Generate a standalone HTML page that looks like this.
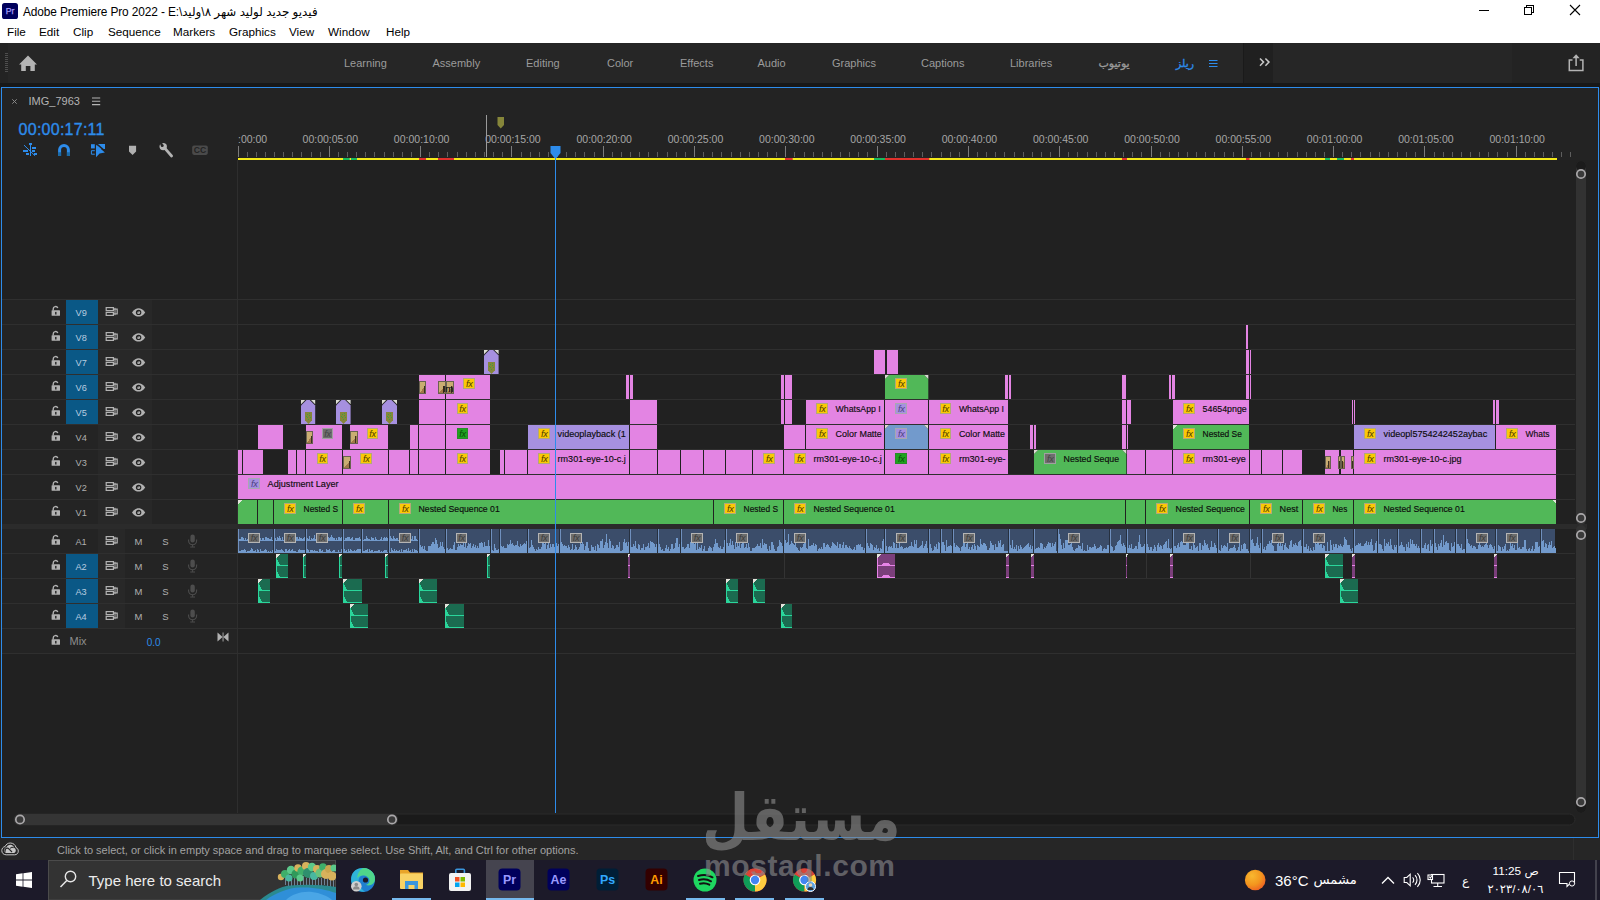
<!DOCTYPE html>
<html lang="en"><head><meta charset="utf-8"><title>Adobe Premiere Pro 2022</title>
<style>
html,body{margin:0;padding:0}
body{width:1600px;height:900px;position:relative;overflow:hidden;background:#232323;font-family:"Liberation Sans","DejaVu Sans",sans-serif;}
.abs{position:absolute;white-space:nowrap;line-height:1}
#titlebar{position:absolute;left:0;top:0;width:1600px;height:43px;background:#fff;color:#000}
#title{left:23px;top:7px;font-size:11.9px;letter-spacing:-0.12px}
.menu{top:26px;font-size:11.7px;color:#000}
#wsbar{position:absolute;left:0;top:43px;width:1600px;height:40px;background:#262626}
#wsgap{position:absolute;left:0;top:83px;width:1600px;height:5px;background:#181818}
.ws{top:14.5px;font-size:11px;color:#9b9b9b}
#panel{position:absolute;left:1px;top:87px;width:1596px;height:749px;border:1px solid #2d8ceb;background:#232323}
#status{position:absolute;left:0;top:838px;width:1600px;height:22px;background:#262626}
#taskbar{position:absolute;left:0;top:860px;width:1600px;height:40px;background:#1c1a29}
svg text{font-family:"Liberation Sans","DejaVu Sans",sans-serif}
</style></head><body>
<div id="titlebar">
<svg class="abs" style="left:2px;top:3px" width="16" height="16" viewBox="0 0 16 16"><rect width="16" height="16" rx="2.6" fill="#00005b"/><text x="8" y="10.8" font-size="8.6" fill="#a8a0ff" stroke="#a8a0ff" stroke-width="0.25" text-anchor="middle" font-family="Liberation Sans, sans-serif">Pr</text></svg>
<div class="abs" id="title">Adobe Premiere Pro 2022 - E:\فيديو جديد لوليد شهر ٨\وليد</div>
<div class="abs menu" style="left:7px">File</div>
<div class="abs menu" style="left:39px">Edit</div>
<div class="abs menu" style="left:73px">Clip</div>
<div class="abs menu" style="left:108px">Sequence</div>
<div class="abs menu" style="left:173px">Markers</div>
<div class="abs menu" style="left:229px">Graphics</div>
<div class="abs menu" style="left:289px">View</div>
<div class="abs menu" style="left:328px">Window</div>
<div class="abs menu" style="left:386px">Help</div>
<svg class="abs" style="left:1470px;top:0" width="130" height="30" viewBox="1470 0 130 30" fill="none" stroke="#000" stroke-width="1" shape-rendering="crispEdges">
<path d="M1479 10.5h10"/><rect x="1524.5" y="7.5" width="7" height="7"/><path d="M1526.5 7.5v-2h7v7h-2"/>
<path d="M1570 5l10 10M1580 5l-10 10" shape-rendering="auto" stroke-width="1.1"/></svg>
</div>
<div id="wsbar">
<div class="abs" style="left:0;top:0;width:8px;height:40px;background:#232323"></div>
<div class="abs" style="left:1243px;top:0;width:30px;height:40px;background:#202020"></div>
<div class="abs" style="left:1243px;top:0;width:1px;height:40px;background:#1a1a1a"></div>
<div class="abs" style="left:1512px;top:0;width:88px;height:40px;background:#232323"></div>
<svg class="abs" style="left:0;top:0" width="1600" height="40" viewBox="0 43 1600 40">
<path d="M5 53.5h3M5 55.5h3M5 57.5h3M5 59.5h3M5 61.5h3M5 63.5h3M5 65.5h3M5 67.5h3M5 69.5h3M5 71.5h3" stroke="#4e4e4e" stroke-width="1"/>
<path d="M28 55.6L37 64.6H34.8V71H30.4V66H25.8V71H21.2V64.6H19Z" fill="#b4b4b4"/>
<path d="M1209 60.5h8.5M1209 63.5h8.5M1209 66.5h8.5" stroke="#2d8ceb" stroke-width="1.1"/>
<path d="M1260 58.5l3.6 3.6-3.6 3.6M1265.4 58.5l3.6 3.6-3.6 3.6" stroke="#c8c8c8" stroke-width="1.5" fill="none"/>
<path d="M1572.5 60h-3.2v10.4h13.6V60h-3.2" stroke="#b4b4b4" stroke-width="1.5" fill="none"/><path d="M1576.1 66v-9" stroke="#b4b4b4" stroke-width="1.5"/><path d="M1576.1 54.2l3.6 4h-7.2z" fill="#b4b4b4"/>
</svg>
<div class="abs ws" style="left:344px">Learning</div>
<div class="abs ws" style="left:432.5px">Assembly</div>
<div class="abs ws" style="left:526px">Editing</div>
<div class="abs ws" style="left:607px">Color</div>
<div class="abs ws" style="left:680px">Effects</div>
<div class="abs ws" style="left:757.5px">Audio</div>
<div class="abs ws" style="left:832px">Graphics</div>
<div class="abs ws" style="left:921px">Captions</div>
<div class="abs ws" style="left:1010px">Libraries</div>
<div class="abs ws" style="left:1098.5px;top:14.5px;font-size:11px;-webkit-text-stroke:0.3px #9b9b9b" dir="rtl">يوتيوب</div>
<div class="abs ws" style="left:1176px;top:14.5px;font-size:11px;color:#2d8ceb;-webkit-text-stroke:0.3px #2d8ceb" dir="rtl">ريلز</div>
</div>
<div id="wsgap"></div>
<div id="panel"></div>
<svg class="abs" style="left:0;top:0" width="1600" height="900" viewBox="0 0 1600 900">
<rect x="2" y="88" width="1596" height="72" fill="#232323"/>
<rect x="2" y="160" width="1596" height="677" fill="#212121"/>
<rect x="2" y="300" width="235" height="225" fill="#242424"/>
<rect x="2" y="529" width="235" height="125" fill="#242424"/>
<rect x="98" y="300" width="54" height="225" fill="#282828"/>
<rect x="98" y="529" width="27" height="100" fill="#282828"/>
<rect x="237" y="160" width="1" height="653" fill="#2e2e2e"/>
<rect x="2" y="299" width="1573" height="1" fill="#2f2f2f"/>
<rect x="2" y="324" width="1573" height="1" fill="#2f2f2f"/>
<rect x="2" y="349" width="1573" height="1" fill="#2f2f2f"/>
<rect x="2" y="374" width="1573" height="1" fill="#2f2f2f"/>
<rect x="2" y="399" width="1573" height="1" fill="#2f2f2f"/>
<rect x="2" y="424" width="1573" height="1" fill="#2f2f2f"/>
<rect x="2" y="449" width="1573" height="1" fill="#2f2f2f"/>
<rect x="2" y="474" width="1573" height="1" fill="#2f2f2f"/>
<rect x="2" y="499" width="1573" height="1" fill="#2f2f2f"/>
<rect x="2" y="524" width="1585" height="5" fill="#2b2b2b"/>
<rect x="2" y="553" width="1573" height="1" fill="#2f2f2f"/>
<rect x="2" y="578" width="1573" height="1" fill="#2f2f2f"/>
<rect x="2" y="603" width="1573" height="1" fill="#2f2f2f"/>
<rect x="2" y="628" width="1573" height="1" fill="#2f2f2f"/>
<rect x="2" y="653" width="1573" height="1" fill="#2f2f2f"/>
<rect x="1576" y="161" width="10" height="364" fill="#323232" rx="5"/>
<rect x="1576" y="161" width="10" height="10" fill="#1b1b1b" rx="5"/>
<rect x="1576" y="525" width="10" height="288" fill="#323232" rx="5"/>
<rect x="1576" y="797" width="10" height="16" fill="#1b1b1b" rx="5"/>
<circle cx="1581" cy="174" r="4.2" fill="#3a3a3a" stroke="#aaa8aa" stroke-width="1.7"/>
<circle cx="1581" cy="518" r="4.2" fill="#3a3a3a" stroke="#aaa8aa" stroke-width="1.7"/>
<circle cx="1581" cy="535" r="4.2" fill="#3a3a3a" stroke="#aaa8aa" stroke-width="1.7"/>
<circle cx="1581" cy="802" r="4.2" fill="#3a3a3a" stroke="#aaa8aa" stroke-width="1.7"/>
<rect x="14" y="814" width="1561" height="11" fill="#1a1a1a" rx="5.5" stroke="#2b2b2b" stroke-width="1"/>
<rect x="14" y="814" width="384" height="11" fill="#353535" rx="5.5"/>
<circle cx="20" cy="819.5" r="4.2" fill="#3a3a3a" stroke="#aaa8aa" stroke-width="1.7"/>
<circle cx="392" cy="819.5" r="4.2" fill="#3a3a3a" stroke="#aaa8aa" stroke-width="1.7"/>
<g fill="#6e6e6e" shape-rendering="crispEdges">
<rect x="238" y="146" width="1" height="11" fill="#7c7c7c"/>
<rect x="247" y="152" width="1" height="5" fill="#5e5e5e"/>
<rect x="256" y="152" width="1" height="5" fill="#5e5e5e"/>
<rect x="265" y="152" width="1" height="5" fill="#5e5e5e"/>
<rect x="274" y="152" width="1" height="5" fill="#5e5e5e"/>
<rect x="283" y="152" width="1" height="5" fill="#5e5e5e"/>
<rect x="292" y="152" width="1" height="5" fill="#5e5e5e"/>
<rect x="301" y="152" width="1" height="5" fill="#5e5e5e"/>
<rect x="311" y="152" width="1" height="5" fill="#5e5e5e"/>
<rect x="320" y="152" width="1" height="5" fill="#5e5e5e"/>
<rect x="329" y="146" width="1" height="11" fill="#7c7c7c"/>
<rect x="338" y="152" width="1" height="5" fill="#5e5e5e"/>
<rect x="347" y="152" width="1" height="5" fill="#5e5e5e"/>
<rect x="356" y="152" width="1" height="5" fill="#5e5e5e"/>
<rect x="365" y="152" width="1" height="5" fill="#5e5e5e"/>
<rect x="374" y="152" width="1" height="5" fill="#5e5e5e"/>
<rect x="384" y="152" width="1" height="5" fill="#5e5e5e"/>
<rect x="393" y="152" width="1" height="5" fill="#5e5e5e"/>
<rect x="402" y="152" width="1" height="5" fill="#5e5e5e"/>
<rect x="411" y="152" width="1" height="5" fill="#5e5e5e"/>
<rect x="420" y="146" width="1" height="11" fill="#7c7c7c"/>
<rect x="429" y="152" width="1" height="5" fill="#5e5e5e"/>
<rect x="438" y="152" width="1" height="5" fill="#5e5e5e"/>
<rect x="447" y="152" width="1" height="5" fill="#5e5e5e"/>
<rect x="457" y="152" width="1" height="5" fill="#5e5e5e"/>
<rect x="466" y="152" width="1" height="5" fill="#5e5e5e"/>
<rect x="475" y="152" width="1" height="5" fill="#5e5e5e"/>
<rect x="484" y="152" width="1" height="5" fill="#5e5e5e"/>
<rect x="493" y="152" width="1" height="5" fill="#5e5e5e"/>
<rect x="502" y="152" width="1" height="5" fill="#5e5e5e"/>
<rect x="511" y="146" width="1" height="11" fill="#7c7c7c"/>
<rect x="521" y="152" width="1" height="5" fill="#5e5e5e"/>
<rect x="530" y="152" width="1" height="5" fill="#5e5e5e"/>
<rect x="539" y="152" width="1" height="5" fill="#5e5e5e"/>
<rect x="548" y="152" width="1" height="5" fill="#5e5e5e"/>
<rect x="557" y="152" width="1" height="5" fill="#5e5e5e"/>
<rect x="566" y="152" width="1" height="5" fill="#5e5e5e"/>
<rect x="575" y="152" width="1" height="5" fill="#5e5e5e"/>
<rect x="584" y="152" width="1" height="5" fill="#5e5e5e"/>
<rect x="594" y="152" width="1" height="5" fill="#5e5e5e"/>
<rect x="603" y="146" width="1" height="11" fill="#7c7c7c"/>
<rect x="612" y="152" width="1" height="5" fill="#5e5e5e"/>
<rect x="621" y="152" width="1" height="5" fill="#5e5e5e"/>
<rect x="630" y="152" width="1" height="5" fill="#5e5e5e"/>
<rect x="639" y="152" width="1" height="5" fill="#5e5e5e"/>
<rect x="648" y="152" width="1" height="5" fill="#5e5e5e"/>
<rect x="657" y="152" width="1" height="5" fill="#5e5e5e"/>
<rect x="667" y="152" width="1" height="5" fill="#5e5e5e"/>
<rect x="676" y="152" width="1" height="5" fill="#5e5e5e"/>
<rect x="685" y="152" width="1" height="5" fill="#5e5e5e"/>
<rect x="694" y="146" width="1" height="11" fill="#7c7c7c"/>
<rect x="703" y="152" width="1" height="5" fill="#5e5e5e"/>
<rect x="712" y="152" width="1" height="5" fill="#5e5e5e"/>
<rect x="721" y="152" width="1" height="5" fill="#5e5e5e"/>
<rect x="731" y="152" width="1" height="5" fill="#5e5e5e"/>
<rect x="740" y="152" width="1" height="5" fill="#5e5e5e"/>
<rect x="749" y="152" width="1" height="5" fill="#5e5e5e"/>
<rect x="758" y="152" width="1" height="5" fill="#5e5e5e"/>
<rect x="767" y="152" width="1" height="5" fill="#5e5e5e"/>
<rect x="776" y="152" width="1" height="5" fill="#5e5e5e"/>
<rect x="785" y="146" width="1" height="11" fill="#7c7c7c"/>
<rect x="794" y="152" width="1" height="5" fill="#5e5e5e"/>
<rect x="804" y="152" width="1" height="5" fill="#5e5e5e"/>
<rect x="813" y="152" width="1" height="5" fill="#5e5e5e"/>
<rect x="822" y="152" width="1" height="5" fill="#5e5e5e"/>
<rect x="831" y="152" width="1" height="5" fill="#5e5e5e"/>
<rect x="840" y="152" width="1" height="5" fill="#5e5e5e"/>
<rect x="849" y="152" width="1" height="5" fill="#5e5e5e"/>
<rect x="858" y="152" width="1" height="5" fill="#5e5e5e"/>
<rect x="867" y="152" width="1" height="5" fill="#5e5e5e"/>
<rect x="877" y="146" width="1" height="11" fill="#7c7c7c"/>
<rect x="886" y="152" width="1" height="5" fill="#5e5e5e"/>
<rect x="895" y="152" width="1" height="5" fill="#5e5e5e"/>
<rect x="904" y="152" width="1" height="5" fill="#5e5e5e"/>
<rect x="913" y="152" width="1" height="5" fill="#5e5e5e"/>
<rect x="922" y="152" width="1" height="5" fill="#5e5e5e"/>
<rect x="931" y="152" width="1" height="5" fill="#5e5e5e"/>
<rect x="941" y="152" width="1" height="5" fill="#5e5e5e"/>
<rect x="950" y="152" width="1" height="5" fill="#5e5e5e"/>
<rect x="959" y="152" width="1" height="5" fill="#5e5e5e"/>
<rect x="968" y="146" width="1" height="11" fill="#7c7c7c"/>
<rect x="977" y="152" width="1" height="5" fill="#5e5e5e"/>
<rect x="986" y="152" width="1" height="5" fill="#5e5e5e"/>
<rect x="995" y="152" width="1" height="5" fill="#5e5e5e"/>
<rect x="1004" y="152" width="1" height="5" fill="#5e5e5e"/>
<rect x="1014" y="152" width="1" height="5" fill="#5e5e5e"/>
<rect x="1023" y="152" width="1" height="5" fill="#5e5e5e"/>
<rect x="1032" y="152" width="1" height="5" fill="#5e5e5e"/>
<rect x="1041" y="152" width="1" height="5" fill="#5e5e5e"/>
<rect x="1050" y="152" width="1" height="5" fill="#5e5e5e"/>
<rect x="1059" y="146" width="1" height="11" fill="#7c7c7c"/>
<rect x="1068" y="152" width="1" height="5" fill="#5e5e5e"/>
<rect x="1077" y="152" width="1" height="5" fill="#5e5e5e"/>
<rect x="1087" y="152" width="1" height="5" fill="#5e5e5e"/>
<rect x="1096" y="152" width="1" height="5" fill="#5e5e5e"/>
<rect x="1105" y="152" width="1" height="5" fill="#5e5e5e"/>
<rect x="1114" y="152" width="1" height="5" fill="#5e5e5e"/>
<rect x="1123" y="152" width="1" height="5" fill="#5e5e5e"/>
<rect x="1132" y="152" width="1" height="5" fill="#5e5e5e"/>
<rect x="1141" y="152" width="1" height="5" fill="#5e5e5e"/>
<rect x="1151" y="146" width="1" height="11" fill="#7c7c7c"/>
<rect x="1160" y="152" width="1" height="5" fill="#5e5e5e"/>
<rect x="1169" y="152" width="1" height="5" fill="#5e5e5e"/>
<rect x="1178" y="152" width="1" height="5" fill="#5e5e5e"/>
<rect x="1187" y="152" width="1" height="5" fill="#5e5e5e"/>
<rect x="1196" y="152" width="1" height="5" fill="#5e5e5e"/>
<rect x="1205" y="152" width="1" height="5" fill="#5e5e5e"/>
<rect x="1214" y="152" width="1" height="5" fill="#5e5e5e"/>
<rect x="1224" y="152" width="1" height="5" fill="#5e5e5e"/>
<rect x="1233" y="152" width="1" height="5" fill="#5e5e5e"/>
<rect x="1242" y="146" width="1" height="11" fill="#7c7c7c"/>
<rect x="1251" y="152" width="1" height="5" fill="#5e5e5e"/>
<rect x="1260" y="152" width="1" height="5" fill="#5e5e5e"/>
<rect x="1269" y="152" width="1" height="5" fill="#5e5e5e"/>
<rect x="1278" y="152" width="1" height="5" fill="#5e5e5e"/>
<rect x="1287" y="152" width="1" height="5" fill="#5e5e5e"/>
<rect x="1297" y="152" width="1" height="5" fill="#5e5e5e"/>
<rect x="1306" y="152" width="1" height="5" fill="#5e5e5e"/>
<rect x="1315" y="152" width="1" height="5" fill="#5e5e5e"/>
<rect x="1324" y="152" width="1" height="5" fill="#5e5e5e"/>
<rect x="1333" y="146" width="1" height="11" fill="#7c7c7c"/>
<rect x="1342" y="152" width="1" height="5" fill="#5e5e5e"/>
<rect x="1351" y="152" width="1" height="5" fill="#5e5e5e"/>
<rect x="1360" y="152" width="1" height="5" fill="#5e5e5e"/>
<rect x="1370" y="152" width="1" height="5" fill="#5e5e5e"/>
<rect x="1379" y="152" width="1" height="5" fill="#5e5e5e"/>
<rect x="1388" y="152" width="1" height="5" fill="#5e5e5e"/>
<rect x="1397" y="152" width="1" height="5" fill="#5e5e5e"/>
<rect x="1406" y="152" width="1" height="5" fill="#5e5e5e"/>
<rect x="1415" y="152" width="1" height="5" fill="#5e5e5e"/>
<rect x="1424" y="146" width="1" height="11" fill="#7c7c7c"/>
<rect x="1434" y="152" width="1" height="5" fill="#5e5e5e"/>
<rect x="1443" y="152" width="1" height="5" fill="#5e5e5e"/>
<rect x="1452" y="152" width="1" height="5" fill="#5e5e5e"/>
<rect x="1461" y="152" width="1" height="5" fill="#5e5e5e"/>
<rect x="1470" y="152" width="1" height="5" fill="#5e5e5e"/>
<rect x="1479" y="152" width="1" height="5" fill="#5e5e5e"/>
<rect x="1488" y="152" width="1" height="5" fill="#5e5e5e"/>
<rect x="1497" y="152" width="1" height="5" fill="#5e5e5e"/>
<rect x="1507" y="152" width="1" height="5" fill="#5e5e5e"/>
<rect x="1516" y="146" width="1" height="11" fill="#7c7c7c"/>
<rect x="1525" y="152" width="1" height="5" fill="#5e5e5e"/>
<rect x="1534" y="152" width="1" height="5" fill="#5e5e5e"/>
<rect x="1543" y="152" width="1" height="5" fill="#5e5e5e"/>
<rect x="1552" y="152" width="1" height="5" fill="#5e5e5e"/>
<rect x="1561" y="152" width="1" height="5" fill="#5e5e5e"/>
<rect x="1570" y="152" width="1" height="5" fill="#5e5e5e"/>
</g>
<text x="238" y="143" fill="#a6a6a6" font-size="10.5" text-anchor="start">:00:00</text>
<text x="330.3" y="143" fill="#a6a6a6" font-size="10.5" text-anchor="middle">00:00:05:00</text>
<text x="421.6" y="143" fill="#a6a6a6" font-size="10.5" text-anchor="middle">00:00:10:00</text>
<text x="512.9" y="143" fill="#a6a6a6" font-size="10.5" text-anchor="middle">00:00:15:00</text>
<text x="604.2" y="143" fill="#a6a6a6" font-size="10.5" text-anchor="middle">00:00:20:00</text>
<text x="695.5" y="143" fill="#a6a6a6" font-size="10.5" text-anchor="middle">00:00:25:00</text>
<text x="786.8" y="143" fill="#a6a6a6" font-size="10.5" text-anchor="middle">00:00:30:00</text>
<text x="878.1" y="143" fill="#a6a6a6" font-size="10.5" text-anchor="middle">00:00:35:00</text>
<text x="969.4" y="143" fill="#a6a6a6" font-size="10.5" text-anchor="middle">00:00:40:00</text>
<text x="1060.7" y="143" fill="#a6a6a6" font-size="10.5" text-anchor="middle">00:00:45:00</text>
<text x="1152" y="143" fill="#a6a6a6" font-size="10.5" text-anchor="middle">00:00:50:00</text>
<text x="1243.3" y="143" fill="#a6a6a6" font-size="10.5" text-anchor="middle">00:00:55:00</text>
<text x="1334.6" y="143" fill="#a6a6a6" font-size="10.5" text-anchor="middle">00:01:00:00</text>
<text x="1425.9" y="143" fill="#a6a6a6" font-size="10.5" text-anchor="middle">00:01:05:00</text>
<text x="1517.2" y="143" fill="#a6a6a6" font-size="10.5" text-anchor="middle">00:01:10:00</text>
<rect x="238" y="158" width="1319" height="2" fill="#f4ea1a" shape-rendering="crispEdges"/>
<rect x="343" y="158" width="6.7" height="2" fill="#18b85c"/>
<rect x="351" y="158" width="6" height="2" fill="#18b85c"/>
<rect x="419" y="158" width="7" height="2" fill="#e0312c"/>
<rect x="438" y="158" width="16" height="2" fill="#e0312c"/>
<rect x="785" y="158" width="7.7" height="2" fill="#e0312c"/>
<rect x="874" y="158" width="11" height="2" fill="#18b85c"/>
<rect x="885" y="158" width="44.3" height="2" fill="#e0312c"/>
<rect x="1122" y="158" width="5" height="2" fill="#e0312c"/>
<rect x="1246" y="158" width="3.5" height="2" fill="#e0312c"/>
<rect x="1325" y="158" width="5" height="2" fill="#18b85c"/>
<rect x="1337" y="158" width="7" height="2" fill="#18b85c"/>
<rect x="1351" y="158" width="3" height="2" fill="#e0312c"/>
<rect x="486" y="115" width="1" height="42" fill="#9a9a9a"/>
<polygon points="497.5,117 504,117 504,125 500.75,128.5 497.5,125" fill="#86863a"/>
<g shape-rendering="crispEdges" font-family="Liberation Sans, DejaVu Sans, sans-serif">
<rect x="1246" y="325" width="1.5" height="24" fill="#E384E3"/>
<polygon points="484,355.5 489.5,350 493.1,350 498.6,355.5 498.6,374 484,374" fill="#A690E0" shape-rendering="geometricPrecision"/>
<polygon points="484,350 488.2,350 484,354.2" fill="#dcdcd4" shape-rendering="geometricPrecision"/>
<polygon points="498.6,350 494.4,350 498.6,354.2" fill="#dcdcd4" shape-rendering="geometricPrecision"/>
<polygon points="488,362 495,362 495,370.2 491.5,373.9 488,370.2" fill="#86863a" shape-rendering="geometricPrecision"/>
<rect x="490" y="364" width="1" height="1" fill="#3fa03f"/>
<rect x="492" y="365" width="1" height="1" fill="#3fa03f"/>
<rect x="490" y="367" width="1" height="1" fill="#3fa03f"/>
<rect x="493" y="367" width="1" height="1" fill="#3fa03f"/>
<rect x="491" y="369" width="1" height="1" fill="#3fa03f"/>
<rect x="492" y="363" width="1" height="1" fill="#3fa03f"/>
<rect x="489" y="366" width="1" height="1" fill="#3fa03f"/>
<rect x="874" y="350" width="11" height="24" fill="#E384E3"/>
<rect x="886.5" y="350" width="11.5" height="24" fill="#E384E3"/>
<rect x="1246" y="350" width="3" height="24" fill="#E384E3"/>
<rect x="1249.8" y="350" width="1.2" height="24" fill="#E384E3"/>
<rect x="419" y="375" width="26" height="24" fill="#E384E3"/>
<rect x="419.5" y="381.5" width="6" height="12" fill="#c9ad72" stroke="#6a6250" stroke-width="1"/>
<polygon points="420,393 425,393 425,386" fill="#a07848"/>
<rect x="423.5" y="386" width="1" height="7" fill="#3a3020"/>
<rect x="446" y="375" width="44" height="24" fill="#E384E3"/>
<rect x="446.5" y="381.5" width="6.5" height="12" fill="#c9ad72" stroke="#6a6250" stroke-width="1"/>
<polygon points="447,393 452.5,393 452.5,386" fill="#a07848"/>
<rect x="451" y="386" width="1" height="7" fill="#3a3020"/>
<rect x="463.9" y="378.5" width="10.7" height="9.8" fill="#fbc906" stroke="#b4a878" stroke-width="1"/>
<text x="469.3" y="386.7" fill="#4a3a00" font-size="9.2" font-style="italic" text-anchor="middle" letter-spacing="-0.3">fx</text>
<rect x="438.5" y="381.5" width="6.5" height="12" fill="#c9ad72" stroke="#6a6250" stroke-width="1"/>
<polygon points="439,393 444.5,393 444.5,386" fill="#a07848"/>
<rect x="443" y="386" width="1" height="7" fill="#3a3020"/>
<text x="443" y="391.8" fill="#0a0a0a" font-size="9.4" stroke="#0a0a0a" stroke-width="0.15">Im</text>
<rect x="626" y="375" width="2.8" height="24" fill="#E384E3"/>
<rect x="630" y="375" width="3" height="24" fill="#E384E3"/>
<rect x="781.2" y="375" width="2.6" height="24" fill="#E384E3"/>
<rect x="785" y="375" width="7" height="24" fill="#E384E3"/>
<rect x="1005" y="375" width="2.7" height="24" fill="#E384E3"/>
<rect x="1008.5" y="375" width="2.5" height="24" fill="#E384E3"/>
<rect x="1122" y="375" width="4" height="24" fill="#E384E3"/>
<rect x="1169" y="375" width="2" height="24" fill="#E384E3"/>
<rect x="1172" y="375" width="2.8" height="24" fill="#E384E3"/>
<rect x="1246" y="375" width="3" height="24" fill="#E384E3"/>
<rect x="1249.8" y="375" width="1.2" height="24" fill="#E384E3"/>
<polygon points="885,379 889,375 924.3,375 928.3,379 928.3,399 885,399" fill="#51B858" shape-rendering="geometricPrecision"/>
<polygon points="885,375 889,375 885,379" fill="#dcdcd4" shape-rendering="geometricPrecision"/>
<polygon points="928.3,375 924.3,375 928.3,379" fill="#dcdcd4" shape-rendering="geometricPrecision"/>
<rect x="895.8" y="378.5" width="10.7" height="9.8" fill="#fbc906" stroke="#b4a878" stroke-width="1"/>
<text x="901.2" y="386.7" fill="#4a3a00" font-size="9.2" font-style="italic" text-anchor="middle" letter-spacing="-0.3">fx</text>
<polygon points="301,405.5 306.5,400 309.7,400 315.2,405.5 315.2,424 301,424" fill="#A690E0" shape-rendering="geometricPrecision"/>
<polygon points="301,400 305.2,400 301,404.2" fill="#dcdcd4" shape-rendering="geometricPrecision"/>
<polygon points="315.2,400 311,400 315.2,404.2" fill="#dcdcd4" shape-rendering="geometricPrecision"/>
<polygon points="305,412 312,412 312,420.2 308.5,423.9 305,420.2" fill="#86863a" shape-rendering="geometricPrecision"/>
<rect x="307" y="414" width="1" height="1" fill="#3fa03f"/>
<rect x="309" y="415" width="1" height="1" fill="#3fa03f"/>
<rect x="307" y="417" width="1" height="1" fill="#3fa03f"/>
<rect x="310" y="417" width="1" height="1" fill="#3fa03f"/>
<rect x="308" y="419" width="1" height="1" fill="#3fa03f"/>
<rect x="309" y="413" width="1" height="1" fill="#3fa03f"/>
<rect x="306" y="416" width="1" height="1" fill="#3fa03f"/>
<polygon points="336,405.5 341.5,400 345.1,400 350.6,405.5 350.6,424 336,424" fill="#A690E0" shape-rendering="geometricPrecision"/>
<polygon points="336,400 340.2,400 336,404.2" fill="#dcdcd4" shape-rendering="geometricPrecision"/>
<polygon points="350.6,400 346.4,400 350.6,404.2" fill="#dcdcd4" shape-rendering="geometricPrecision"/>
<polygon points="340,412 347,412 347,420.2 343.5,423.9 340,420.2" fill="#86863a" shape-rendering="geometricPrecision"/>
<rect x="342" y="414" width="1" height="1" fill="#3fa03f"/>
<rect x="344" y="415" width="1" height="1" fill="#3fa03f"/>
<rect x="342" y="417" width="1" height="1" fill="#3fa03f"/>
<rect x="345" y="417" width="1" height="1" fill="#3fa03f"/>
<rect x="343" y="419" width="1" height="1" fill="#3fa03f"/>
<rect x="344" y="413" width="1" height="1" fill="#3fa03f"/>
<rect x="341" y="416" width="1" height="1" fill="#3fa03f"/>
<polygon points="382,405.5 387.5,400 391.5,400 397,405.5 397,424 382,424" fill="#A690E0" shape-rendering="geometricPrecision"/>
<polygon points="382,400 386.2,400 382,404.2" fill="#dcdcd4" shape-rendering="geometricPrecision"/>
<polygon points="397,400 392.8,400 397,404.2" fill="#dcdcd4" shape-rendering="geometricPrecision"/>
<polygon points="386,412 393,412 393,420.2 389.5,423.9 386,420.2" fill="#86863a" shape-rendering="geometricPrecision"/>
<rect x="388" y="414" width="1" height="1" fill="#3fa03f"/>
<rect x="390" y="415" width="1" height="1" fill="#3fa03f"/>
<rect x="388" y="417" width="1" height="1" fill="#3fa03f"/>
<rect x="391" y="417" width="1" height="1" fill="#3fa03f"/>
<rect x="389" y="419" width="1" height="1" fill="#3fa03f"/>
<rect x="390" y="413" width="1" height="1" fill="#3fa03f"/>
<rect x="387" y="416" width="1" height="1" fill="#3fa03f"/>
<rect x="419" y="400" width="26" height="24" fill="#E384E3"/>
<rect x="446" y="400" width="44" height="24" fill="#E384E3"/>
<rect x="457" y="403.5" width="10.7" height="9.8" fill="#fbc906" stroke="#b4a878" stroke-width="1"/>
<text x="462.4" y="411.7" fill="#4a3a00" font-size="9.2" font-style="italic" text-anchor="middle" letter-spacing="-0.3">fx</text>
<rect x="630" y="400" width="26.8" height="24" fill="#E384E3"/>
<rect x="781.2" y="400" width="2.6" height="24" fill="#E384E3"/>
<rect x="785" y="400" width="7" height="24" fill="#E384E3"/>
<rect x="1122" y="400" width="4" height="24" fill="#E384E3"/>
<rect x="1127.2" y="400" width="3.8" height="24" fill="#E384E3"/>
<rect x="1352" y="400" width="1" height="24" fill="#E384E3"/>
<rect x="1354" y="400" width="1" height="24" fill="#E384E3"/>
<rect x="1493" y="400" width="1.8" height="24" fill="#E384E3"/>
<rect x="1496" y="400" width="3" height="24" fill="#E384E3"/>
<rect x="806" y="400" width="78" height="24" fill="#E384E3"/>
<rect x="816.8" y="403.5" width="10.7" height="9.8" fill="#fbc906" stroke="#b4a878" stroke-width="1"/>
<text x="822.2" y="411.7" fill="#4a3a00" font-size="9.2" font-style="italic" text-anchor="middle" letter-spacing="-0.3">fx</text>
<text x="835.6" y="411.8" fill="#0c0c0c" font-size="9.4" textLength="45.1" lengthAdjust="spacingAndGlyphs" stroke="#0c0c0c" stroke-width="0.15">WhatsApp I</text>
<rect x="885" y="400" width="43" height="24" fill="#E384E3"/>
<rect x="895.8" y="403.5" width="10.7" height="9.8" fill="#a690e0" stroke="#a8a8b0" stroke-width="1"/>
<text x="901.2" y="411.7" fill="#4a4080" font-size="9.2" font-style="italic" text-anchor="middle" letter-spacing="-0.3">fx</text>
<rect x="929.3" y="400" width="78.4" height="24" fill="#E384E3"/>
<rect x="940.1" y="403.5" width="10.7" height="9.8" fill="#fbc906" stroke="#b4a878" stroke-width="1"/>
<text x="945.5" y="411.7" fill="#4a3a00" font-size="9.2" font-style="italic" text-anchor="middle" letter-spacing="-0.3">fx</text>
<text x="958.9" y="411.8" fill="#0c0c0c" font-size="9.4" textLength="45.1" lengthAdjust="spacingAndGlyphs" stroke="#0c0c0c" stroke-width="0.15">WhatsApp I</text>
<rect x="1173" y="400" width="76" height="24" fill="#E384E3"/>
<rect x="1183.8" y="403.5" width="10.7" height="9.8" fill="#fbc906" stroke="#b4a878" stroke-width="1"/>
<text x="1189.2" y="411.7" fill="#4a3a00" font-size="9.2" font-style="italic" text-anchor="middle" letter-spacing="-0.3">fx</text>
<text x="1202.6" y="411.8" fill="#0c0c0c" font-size="9.4" textLength="44.1" lengthAdjust="spacingAndGlyphs" stroke="#0c0c0c" stroke-width="0.15">54654pnge</text>
<rect x="258" y="425" width="24.8" height="24" fill="#E384E3"/>
<rect x="306" y="425" width="36" height="24" fill="#E384E3"/>
<rect x="306.5" y="431.5" width="6" height="12" fill="#c9ad72" stroke="#6a6250" stroke-width="1"/>
<polygon points="307,443 312,443 312,436" fill="#a07848"/>
<rect x="310.5" y="436" width="1" height="7" fill="#3a3020"/>
<rect x="322" y="428.5" width="10.7" height="9.8" fill="#6e6e6e" stroke="#a0a0a0" stroke-width="1"/>
<text x="327.4" y="436.7" fill="#454545" font-size="9.2" font-style="italic" text-anchor="middle" letter-spacing="-0.3">fx</text>
<rect x="350" y="425" width="38" height="24" fill="#E384E3"/>
<rect x="350.5" y="431.5" width="6.5" height="12" fill="#c9ad72" stroke="#6a6250" stroke-width="1"/>
<polygon points="351,443 356.5,443 356.5,436" fill="#a07848"/>
<rect x="355" y="436" width="1" height="7" fill="#3a3020"/>
<rect x="367.2" y="428.5" width="10.7" height="9.8" fill="#fbc906" stroke="#b4a878" stroke-width="1"/>
<text x="372.6" y="436.7" fill="#4a3a00" font-size="9.2" font-style="italic" text-anchor="middle" letter-spacing="-0.3">fx</text>
<rect x="410" y="425" width="8" height="24" fill="#E384E3"/>
<rect x="419" y="425" width="26" height="24" fill="#E384E3"/>
<rect x="630" y="425" width="27" height="24" fill="#E384E3"/>
<rect x="784" y="425" width="21" height="24" fill="#E384E3"/>
<rect x="1030" y="425" width="2.6" height="24" fill="#E384E3"/>
<rect x="1033.6" y="425" width="2.4" height="24" fill="#E384E3"/>
<rect x="1122.3" y="425" width="3.7" height="24" fill="#E384E3"/>
<rect x="1126.8" y="425" width="1.2" height="24" fill="#E384E3"/>
<rect x="446" y="425" width="44" height="24" fill="#E384E3"/>
<rect x="457" y="428.5" width="10.7" height="9.8" fill="#1fa31f" stroke="#2a8a2a" stroke-width="1"/>
<text x="462.4" y="436.7" fill="#0a4a0a" font-size="9.2" font-style="italic" text-anchor="middle" letter-spacing="-0.3">fx</text>
<rect x="528" y="425" width="101" height="24" fill="#A690E0"/>
<rect x="538.8" y="428.5" width="10.7" height="9.8" fill="#fbc906" stroke="#b4a878" stroke-width="1"/>
<text x="544.2" y="436.7" fill="#4a3a00" font-size="9.2" font-style="italic" text-anchor="middle" letter-spacing="-0.3">fx</text>
<text x="557.6" y="436.8" fill="#0c0c0c" font-size="9.4" textLength="68.2" lengthAdjust="spacingAndGlyphs" stroke="#0c0c0c" stroke-width="0.15">videoplayback (1</text>
<rect x="806" y="425" width="78" height="24" fill="#E384E3"/>
<rect x="816.8" y="428.5" width="10.7" height="9.8" fill="#fbc906" stroke="#b4a878" stroke-width="1"/>
<text x="822.2" y="436.7" fill="#4a3a00" font-size="9.2" font-style="italic" text-anchor="middle" letter-spacing="-0.3">fx</text>
<text x="835.6" y="436.8" fill="#0c0c0c" font-size="9.4" textLength="46.2" lengthAdjust="spacingAndGlyphs" stroke="#0c0c0c" stroke-width="0.15">Color Matte</text>
<polygon points="885,429 889,425 924,425 928,429 928,449 885,449" fill="#729ACC" shape-rendering="geometricPrecision"/>
<polygon points="885,425 889,425 885,429" fill="#dcdcd4" shape-rendering="geometricPrecision"/>
<polygon points="928,425 924,425 928,429" fill="#dcdcd4" shape-rendering="geometricPrecision"/>
<rect x="895.8" y="428.5" width="10.7" height="9.8" fill="#a690e0" stroke="#a8a8b0" stroke-width="1"/>
<text x="901.2" y="436.7" fill="#4a4080" font-size="9.2" font-style="italic" text-anchor="middle" letter-spacing="-0.3">fx</text>
<rect x="929.3" y="425" width="78.4" height="24" fill="#E384E3"/>
<rect x="940.1" y="428.5" width="10.7" height="9.8" fill="#fbc906" stroke="#b4a878" stroke-width="1"/>
<text x="945.5" y="436.7" fill="#4a3a00" font-size="9.2" font-style="italic" text-anchor="middle" letter-spacing="-0.3">fx</text>
<text x="958.9" y="436.8" fill="#0c0c0c" font-size="9.4" textLength="46.2" lengthAdjust="spacingAndGlyphs" stroke="#0c0c0c" stroke-width="0.15">Color Matte</text>
<rect x="1173" y="425" width="76" height="24" fill="#51B858"/>
<rect x="1183.8" y="428.5" width="10.7" height="9.8" fill="#fbc906" stroke="#b4a878" stroke-width="1"/>
<text x="1189.2" y="436.7" fill="#4a3a00" font-size="9.2" font-style="italic" text-anchor="middle" letter-spacing="-0.3">fx</text>
<text x="1202.6" y="436.8" fill="#0c0c0c" font-size="9.4" textLength="39.3" lengthAdjust="spacingAndGlyphs" stroke="#0c0c0c" stroke-width="0.15">Nested Se</text>
<polygon points="1173,425 1177,425 1173,429" fill="#e4e4dc"/>
<rect x="1354" y="425" width="141" height="24" fill="#A690E0"/>
<rect x="1364.8" y="428.5" width="10.7" height="9.8" fill="#fbc906" stroke="#b4a878" stroke-width="1"/>
<text x="1370.2" y="436.7" fill="#4a3a00" font-size="9.2" font-style="italic" text-anchor="middle" letter-spacing="-0.3">fx</text>
<text x="1383.6" y="436.8" fill="#0c0c0c" font-size="9.4" textLength="103.6" lengthAdjust="spacingAndGlyphs" stroke="#0c0c0c" stroke-width="0.15">videopl5754242452aybac</text>
<rect x="1496" y="425" width="60" height="24" fill="#E384E3"/>
<rect x="1506.8" y="428.5" width="10.7" height="9.8" fill="#fbc906" stroke="#b4a878" stroke-width="1"/>
<text x="1512.2" y="436.7" fill="#4a3a00" font-size="9.2" font-style="italic" text-anchor="middle" letter-spacing="-0.3">fx</text>
<text x="1525.6" y="436.8" fill="#0c0c0c" font-size="9.4" textLength="23.9" lengthAdjust="spacingAndGlyphs" stroke="#0c0c0c" stroke-width="0.15">Whats</text>
<rect x="238" y="450" width="4" height="24" fill="#E384E3"/>
<rect x="243" y="450" width="20" height="24" fill="#E384E3"/>
<rect x="288" y="450" width="8" height="24" fill="#E384E3"/>
<rect x="297" y="450" width="8" height="24" fill="#E384E3"/>
<rect x="389" y="450" width="20" height="24" fill="#E384E3"/>
<rect x="410" y="450" width="8" height="24" fill="#E384E3"/>
<rect x="419" y="450" width="26" height="24" fill="#E384E3"/>
<rect x="500" y="450" width="4" height="24" fill="#E384E3"/>
<rect x="505" y="450" width="22" height="24" fill="#E384E3"/>
<rect x="630" y="450" width="27" height="24" fill="#E384E3"/>
<rect x="658" y="450" width="22" height="24" fill="#E384E3"/>
<rect x="681" y="450" width="22" height="24" fill="#E384E3"/>
<rect x="704" y="450" width="21" height="24" fill="#E384E3"/>
<rect x="726" y="450" width="26" height="24" fill="#E384E3"/>
<rect x="1127" y="450" width="18" height="24" fill="#E384E3"/>
<rect x="1146" y="450" width="26" height="24" fill="#E384E3"/>
<rect x="1250" y="450" width="11" height="24" fill="#E384E3"/>
<rect x="1262" y="450" width="20" height="24" fill="#E384E3"/>
<rect x="1283" y="450" width="19" height="24" fill="#E384E3"/>
<rect x="306" y="450" width="36" height="24" fill="#E384E3"/>
<rect x="317.1" y="453.5" width="10.7" height="9.8" fill="#fbc906" stroke="#b4a878" stroke-width="1"/>
<text x="322.5" y="461.7" fill="#4a3a00" font-size="9.2" font-style="italic" text-anchor="middle" letter-spacing="-0.3">fx</text>
<rect x="343" y="450" width="45" height="24" fill="#E384E3"/>
<rect x="343.5" y="456.5" width="7" height="12" fill="#c9ad72" stroke="#6a6250" stroke-width="1"/>
<polygon points="344,468 350,468 350,461" fill="#a07848"/>
<rect x="348.5" y="461" width="1" height="7" fill="#3a3020"/>
<rect x="360.9" y="453.5" width="10.7" height="9.8" fill="#fbc906" stroke="#b4a878" stroke-width="1"/>
<text x="366.3" y="461.7" fill="#4a3a00" font-size="9.2" font-style="italic" text-anchor="middle" letter-spacing="-0.3">fx</text>
<rect x="446" y="450" width="44" height="24" fill="#E384E3"/>
<rect x="457" y="453.5" width="10.7" height="9.8" fill="#fbc906" stroke="#b4a878" stroke-width="1"/>
<text x="462.4" y="461.7" fill="#4a3a00" font-size="9.2" font-style="italic" text-anchor="middle" letter-spacing="-0.3">fx</text>
<rect x="528" y="450" width="101" height="24" fill="#E384E3"/>
<rect x="538.8" y="453.5" width="10.7" height="9.8" fill="#fbc906" stroke="#b4a878" stroke-width="1"/>
<text x="544.2" y="461.7" fill="#4a3a00" font-size="9.2" font-style="italic" text-anchor="middle" letter-spacing="-0.3">fx</text>
<text x="557.6" y="461.8" fill="#0c0c0c" font-size="9.4" textLength="68.2" lengthAdjust="spacingAndGlyphs" stroke="#0c0c0c" stroke-width="0.15">rm301-eye-10-c.j</text>
<rect x="753" y="450" width="30" height="24" fill="#E384E3"/>
<rect x="763.8" y="453.5" width="10.7" height="9.8" fill="#fbc906" stroke="#b4a878" stroke-width="1"/>
<text x="769.2" y="461.7" fill="#4a3a00" font-size="9.2" font-style="italic" text-anchor="middle" letter-spacing="-0.3">fx</text>
<rect x="784" y="450" width="100" height="24" fill="#E384E3"/>
<rect x="794.8" y="453.5" width="10.7" height="9.8" fill="#fbc906" stroke="#b4a878" stroke-width="1"/>
<text x="800.2" y="461.7" fill="#4a3a00" font-size="9.2" font-style="italic" text-anchor="middle" letter-spacing="-0.3">fx</text>
<text x="813.6" y="461.8" fill="#0c0c0c" font-size="9.4" textLength="68.2" lengthAdjust="spacingAndGlyphs" stroke="#0c0c0c" stroke-width="0.15">rm301-eye-10-c.j</text>
<rect x="885" y="450" width="43" height="24" fill="#E384E3"/>
<rect x="895.8" y="453.5" width="10.7" height="9.8" fill="#1fa31f" stroke="#2a8a2a" stroke-width="1"/>
<text x="901.2" y="461.7" fill="#0a4a0a" font-size="9.2" font-style="italic" text-anchor="middle" letter-spacing="-0.3">fx</text>
<rect x="929.3" y="450" width="78.4" height="24" fill="#E384E3"/>
<rect x="940.1" y="453.5" width="10.7" height="9.8" fill="#fbc906" stroke="#b4a878" stroke-width="1"/>
<text x="945.5" y="461.7" fill="#4a3a00" font-size="9.2" font-style="italic" text-anchor="middle" letter-spacing="-0.3">fx</text>
<text x="958.9" y="461.8" fill="#0c0c0c" font-size="9.4" textLength="46.7" lengthAdjust="spacingAndGlyphs" stroke="#0c0c0c" stroke-width="0.15">rm301-eye-</text>
<polygon points="1034,454 1038,450 1122.3,450 1126.3,454 1126.3,474 1034,474" fill="#51B858" shape-rendering="geometricPrecision"/>
<polygon points="1034,450 1038,450 1034,454" fill="#dcdcd4" shape-rendering="geometricPrecision"/>
<polygon points="1126.3,450 1122.3,450 1126.3,454" fill="#dcdcd4" shape-rendering="geometricPrecision"/>
<rect x="1044.8" y="453.5" width="10.7" height="9.8" fill="#6e6e6e" stroke="#a0a0a0" stroke-width="1"/>
<text x="1050.2" y="461.7" fill="#454545" font-size="9.2" font-style="italic" text-anchor="middle" letter-spacing="-0.3">fx</text>
<text x="1063.6" y="461.8" fill="#0c0c0c" font-size="9.4" textLength="55.5" lengthAdjust="spacingAndGlyphs" stroke="#0c0c0c" stroke-width="0.15">Nested Seque</text>
<rect x="1173" y="450" width="76" height="24" fill="#E384E3"/>
<rect x="1183.8" y="453.5" width="10.7" height="9.8" fill="#fbc906" stroke="#b4a878" stroke-width="1"/>
<text x="1189.2" y="461.7" fill="#4a3a00" font-size="9.2" font-style="italic" text-anchor="middle" letter-spacing="-0.3">fx</text>
<text x="1202.6" y="461.8" fill="#0c0c0c" font-size="9.4" textLength="43.2" lengthAdjust="spacingAndGlyphs" stroke="#0c0c0c" stroke-width="0.15">rm301-eye</text>
<rect x="1325" y="450" width="14" height="24" fill="#E384E3"/>
<rect x="1325.5" y="456.5" width="4.5" height="12" fill="#c9ad72" stroke="#6a6250" stroke-width="1"/>
<polygon points="1326,468 1329.5,468 1329.5,461" fill="#a07848"/>
<rect x="1328" y="461" width="1" height="7" fill="#3a3020"/>
<rect x="1340.7" y="450" width="12.3" height="24" fill="#E384E3"/>
<rect x="1338" y="456.5" width="2.5" height="12" fill="#c9ad72" stroke="#6a6250" stroke-width="1"/>
<polygon points="1338.5,468 1340,468 1340,461" fill="#a07848"/>
<rect x="1338.5" y="461" width="1" height="7" fill="#3a3020"/>
<rect x="1341.2" y="456.5" width="3" height="12" fill="#c9ad72" stroke="#6a6250" stroke-width="1"/>
<polygon points="1341.7,468 1343.7,468 1343.7,461" fill="#a07848"/>
<rect x="1342.2" y="461" width="1" height="7" fill="#3a3020"/>
<rect x="1351.5" y="456.5" width="2" height="12" fill="#c9ad72" stroke="#6a6250" stroke-width="1"/>
<polygon points="1352,468 1353,468 1353,461" fill="#a07848"/>
<rect x="1351.5" y="461" width="1" height="7" fill="#3a3020"/>
<rect x="1354" y="450" width="202" height="24" fill="#E384E3"/>
<rect x="1364.8" y="453.5" width="10.7" height="9.8" fill="#fbc906" stroke="#b4a878" stroke-width="1"/>
<text x="1370.2" y="461.7" fill="#4a3a00" font-size="9.2" font-style="italic" text-anchor="middle" letter-spacing="-0.3">fx</text>
<text x="1383.6" y="461.8" fill="#0c0c0c" font-size="9.4" textLength="77.9" lengthAdjust="spacingAndGlyphs" stroke="#0c0c0c" stroke-width="0.15">rm301-eye-10-c.jpg</text>
<rect x="238" y="475" width="1318" height="24" fill="#E384E3"/>
<rect x="248.8" y="478.5" width="10.7" height="9.8" fill="#a690e0" stroke="#a8a8b0" stroke-width="1"/>
<text x="254.2" y="486.7" fill="#4a4080" font-size="9.2" font-style="italic" text-anchor="middle" letter-spacing="-0.3">fx</text>
<text x="267.6" y="486.8" fill="#0c0c0c" font-size="9.4" textLength="71" lengthAdjust="spacingAndGlyphs" stroke="#0c0c0c" stroke-width="0.15">Adjustment Layer</text>
<rect x="238" y="500" width="19" height="24" fill="#51B858"/>
<rect x="258" y="500" width="15" height="24" fill="#51B858"/>
<rect x="274" y="500" width="68" height="24" fill="#51B858"/>
<rect x="284.8" y="503.5" width="10.7" height="9.8" fill="#fbc906" stroke="#b4a878" stroke-width="1"/>
<text x="290.2" y="511.7" fill="#4a3a00" font-size="9.2" font-style="italic" text-anchor="middle" letter-spacing="-0.3">fx</text>
<text x="303.6" y="511.8" fill="#0c0c0c" font-size="9.4" textLength="34.5" lengthAdjust="spacingAndGlyphs" stroke="#0c0c0c" stroke-width="0.15">Nested S</text>
<rect x="343" y="500" width="45" height="24" fill="#51B858"/>
<rect x="353.8" y="503.5" width="10.7" height="9.8" fill="#fbc906" stroke="#b4a878" stroke-width="1"/>
<text x="359.2" y="511.7" fill="#4a3a00" font-size="9.2" font-style="italic" text-anchor="middle" letter-spacing="-0.3">fx</text>
<rect x="389" y="500" width="324" height="24" fill="#51B858"/>
<rect x="399.8" y="503.5" width="10.7" height="9.8" fill="#fbc906" stroke="#b4a878" stroke-width="1"/>
<text x="405.2" y="511.7" fill="#4a3a00" font-size="9.2" font-style="italic" text-anchor="middle" letter-spacing="-0.3">fx</text>
<text x="418.6" y="511.8" fill="#0c0c0c" font-size="9.4" textLength="81.2" lengthAdjust="spacingAndGlyphs" stroke="#0c0c0c" stroke-width="0.15">Nested Sequence 01</text>
<rect x="714" y="500" width="69" height="24" fill="#51B858"/>
<rect x="724.8" y="503.5" width="10.7" height="9.8" fill="#fbc906" stroke="#b4a878" stroke-width="1"/>
<text x="730.2" y="511.7" fill="#4a3a00" font-size="9.2" font-style="italic" text-anchor="middle" letter-spacing="-0.3">fx</text>
<text x="743.6" y="511.8" fill="#0c0c0c" font-size="9.4" textLength="34.5" lengthAdjust="spacingAndGlyphs" stroke="#0c0c0c" stroke-width="0.15">Nested S</text>
<rect x="784" y="500" width="341" height="24" fill="#51B858"/>
<rect x="794.8" y="503.5" width="10.7" height="9.8" fill="#fbc906" stroke="#b4a878" stroke-width="1"/>
<text x="800.2" y="511.7" fill="#4a3a00" font-size="9.2" font-style="italic" text-anchor="middle" letter-spacing="-0.3">fx</text>
<text x="813.6" y="511.8" fill="#0c0c0c" font-size="9.4" textLength="81.2" lengthAdjust="spacingAndGlyphs" stroke="#0c0c0c" stroke-width="0.15">Nested Sequence 01</text>
<rect x="1126" y="500" width="19" height="24" fill="#51B858"/>
<rect x="1146" y="500" width="103" height="24" fill="#51B858"/>
<rect x="1156.8" y="503.5" width="10.7" height="9.8" fill="#fbc906" stroke="#b4a878" stroke-width="1"/>
<text x="1162.2" y="511.7" fill="#4a3a00" font-size="9.2" font-style="italic" text-anchor="middle" letter-spacing="-0.3">fx</text>
<text x="1175.6" y="511.8" fill="#0c0c0c" font-size="9.4" textLength="69.3" lengthAdjust="spacingAndGlyphs" stroke="#0c0c0c" stroke-width="0.15">Nested Sequence</text>
<rect x="1250" y="500" width="52" height="24" fill="#51B858"/>
<rect x="1260.8" y="503.5" width="10.7" height="9.8" fill="#fbc906" stroke="#b4a878" stroke-width="1"/>
<text x="1266.2" y="511.7" fill="#4a3a00" font-size="9.2" font-style="italic" text-anchor="middle" letter-spacing="-0.3">fx</text>
<text x="1279.6" y="511.8" fill="#0c0c0c" font-size="9.4" textLength="18.7" lengthAdjust="spacingAndGlyphs" stroke="#0c0c0c" stroke-width="0.15">Nest</text>
<rect x="1303" y="500" width="50" height="24" fill="#51B858"/>
<rect x="1313.8" y="503.5" width="10.7" height="9.8" fill="#fbc906" stroke="#b4a878" stroke-width="1"/>
<text x="1319.2" y="511.7" fill="#4a3a00" font-size="9.2" font-style="italic" text-anchor="middle" letter-spacing="-0.3">fx</text>
<text x="1332.6" y="511.8" fill="#0c0c0c" font-size="9.4" textLength="14.7" lengthAdjust="spacingAndGlyphs" stroke="#0c0c0c" stroke-width="0.15">Nes</text>
<rect x="1354" y="500" width="202" height="24" fill="#51B858"/>
<rect x="1364.8" y="503.5" width="10.7" height="9.8" fill="#fbc906" stroke="#b4a878" stroke-width="1"/>
<text x="1370.2" y="511.7" fill="#4a3a00" font-size="9.2" font-style="italic" text-anchor="middle" letter-spacing="-0.3">fx</text>
<text x="1383.6" y="511.8" fill="#0c0c0c" font-size="9.4" textLength="81.2" lengthAdjust="spacingAndGlyphs" stroke="#0c0c0c" stroke-width="0.15">Nested Sequence 01</text>
<polygon points="238,500 242,500 238,504" fill="#e4e4dc"/>
<polygon points="1556,500 1552,500 1556,504" fill="#e4e4dc"/>
</g>
<g shape-rendering="crispEdges">
<rect x="238" y="529" width="35" height="24" fill="#3b4d6a"/>
<rect x="238" y="529" width="1" height="24" fill="#6f8fbd"/>
<rect x="274" y="529" width="31" height="24" fill="#3b4d6a"/>
<rect x="274" y="529" width="1" height="24" fill="#6f8fbd"/>
<rect x="306" y="529" width="36" height="24" fill="#3b4d6a"/>
<rect x="306" y="529" width="1" height="24" fill="#6f8fbd"/>
<rect x="343" y="529" width="18" height="24" fill="#3b4d6a"/>
<rect x="343" y="529" width="1" height="24" fill="#6f8fbd"/>
<rect x="362" y="529" width="26" height="24" fill="#3b4d6a"/>
<rect x="362" y="529" width="1" height="24" fill="#6f8fbd"/>
<rect x="389" y="529" width="29" height="24" fill="#3b4d6a"/>
<rect x="389" y="529" width="1" height="24" fill="#6f8fbd"/>
<rect x="419" y="529" width="25.5" height="24" fill="#3b4d6a"/>
<rect x="419" y="529" width="1" height="24" fill="#6f8fbd"/>
<rect x="445.5" y="529" width="44.5" height="24" fill="#3b4d6a"/>
<rect x="445.5" y="529" width="1" height="24" fill="#6f8fbd"/>
<rect x="491" y="529" width="8" height="24" fill="#3b4d6a"/>
<rect x="491" y="529" width="1" height="24" fill="#6f8fbd"/>
<rect x="500" y="529" width="27" height="24" fill="#3b4d6a"/>
<rect x="500" y="529" width="1" height="24" fill="#6f8fbd"/>
<rect x="528" y="529" width="31" height="24" fill="#3b4d6a"/>
<rect x="528" y="529" width="1" height="24" fill="#6f8fbd"/>
<rect x="560" y="529" width="69" height="24" fill="#3b4d6a"/>
<rect x="560" y="529" width="1" height="24" fill="#6f8fbd"/>
<rect x="630" y="529" width="27" height="24" fill="#3b4d6a"/>
<rect x="630" y="529" width="1" height="24" fill="#6f8fbd"/>
<rect x="658" y="529" width="22" height="24" fill="#3b4d6a"/>
<rect x="658" y="529" width="1" height="24" fill="#6f8fbd"/>
<rect x="681" y="529" width="44" height="24" fill="#3b4d6a"/>
<rect x="681" y="529" width="1" height="24" fill="#6f8fbd"/>
<rect x="726" y="529" width="57" height="24" fill="#3b4d6a"/>
<rect x="726" y="529" width="1" height="24" fill="#6f8fbd"/>
<rect x="784" y="529" width="81" height="24" fill="#3b4d6a"/>
<rect x="784" y="529" width="1" height="24" fill="#6f8fbd"/>
<rect x="866" y="529" width="18" height="24" fill="#3b4d6a"/>
<rect x="866" y="529" width="1" height="24" fill="#6f8fbd"/>
<rect x="885" y="529" width="43" height="24" fill="#3b4d6a"/>
<rect x="885" y="529" width="1" height="24" fill="#6f8fbd"/>
<rect x="929" y="529" width="11" height="24" fill="#3b4d6a"/>
<rect x="929" y="529" width="1" height="24" fill="#6f8fbd"/>
<rect x="941" y="529" width="11" height="24" fill="#3b4d6a"/>
<rect x="941" y="529" width="1" height="24" fill="#6f8fbd"/>
<rect x="953" y="529" width="55" height="24" fill="#3b4d6a"/>
<rect x="953" y="529" width="1" height="24" fill="#6f8fbd"/>
<rect x="1009" y="529" width="24" height="24" fill="#3b4d6a"/>
<rect x="1009" y="529" width="1" height="24" fill="#6f8fbd"/>
<rect x="1034" y="529" width="23" height="24" fill="#3b4d6a"/>
<rect x="1034" y="529" width="1" height="24" fill="#6f8fbd"/>
<rect x="1058" y="529" width="51" height="24" fill="#3b4d6a"/>
<rect x="1058" y="529" width="1" height="24" fill="#6f8fbd"/>
<rect x="1110" y="529" width="16" height="24" fill="#3b4d6a"/>
<rect x="1110" y="529" width="1" height="24" fill="#6f8fbd"/>
<rect x="1127" y="529" width="18" height="24" fill="#3b4d6a"/>
<rect x="1127" y="529" width="1" height="24" fill="#6f8fbd"/>
<rect x="1146" y="529" width="26" height="24" fill="#3b4d6a"/>
<rect x="1146" y="529" width="1" height="24" fill="#6f8fbd"/>
<rect x="1173" y="529" width="44" height="24" fill="#3b4d6a"/>
<rect x="1173" y="529" width="1" height="24" fill="#6f8fbd"/>
<rect x="1218" y="529" width="31" height="24" fill="#3b4d6a"/>
<rect x="1218" y="529" width="1" height="24" fill="#6f8fbd"/>
<rect x="1250" y="529" width="11" height="24" fill="#3b4d6a"/>
<rect x="1250" y="529" width="1" height="24" fill="#6f8fbd"/>
<rect x="1262" y="529" width="40" height="24" fill="#3b4d6a"/>
<rect x="1262" y="529" width="1" height="24" fill="#6f8fbd"/>
<rect x="1303" y="529" width="50" height="24" fill="#3b4d6a"/>
<rect x="1303" y="529" width="1" height="24" fill="#6f8fbd"/>
<rect x="1354" y="529" width="23" height="24" fill="#3b4d6a"/>
<rect x="1354" y="529" width="1" height="24" fill="#6f8fbd"/>
<rect x="1378" y="529" width="19" height="24" fill="#3b4d6a"/>
<rect x="1378" y="529" width="1" height="24" fill="#6f8fbd"/>
<rect x="1398" y="529" width="22" height="24" fill="#3b4d6a"/>
<rect x="1398" y="529" width="1" height="24" fill="#6f8fbd"/>
<rect x="1421" y="529" width="12" height="24" fill="#3b4d6a"/>
<rect x="1421" y="529" width="1" height="24" fill="#6f8fbd"/>
<rect x="1434" y="529" width="21" height="24" fill="#3b4d6a"/>
<rect x="1434" y="529" width="1" height="24" fill="#6f8fbd"/>
<rect x="1456" y="529" width="9" height="24" fill="#3b4d6a"/>
<rect x="1456" y="529" width="1" height="24" fill="#6f8fbd"/>
<rect x="1466" y="529" width="29" height="24" fill="#3b4d6a"/>
<rect x="1466" y="529" width="1" height="24" fill="#6f8fbd"/>
<rect x="1496" y="529" width="44" height="24" fill="#3b4d6a"/>
<rect x="1496" y="529" width="1" height="24" fill="#6f8fbd"/>
<rect x="1541" y="529" width="14" height="24" fill="#3b4d6a"/>
<rect x="1541" y="529" width="1" height="24" fill="#6f8fbd"/>
<path fill="#729acc" d="M238 541v-2h1v2zM238 553v-3h1v3zM239 541v-2h1v2zM239 553v-2h1v2zM240 541v-2h1v2zM240 553v-2h1v2zM241 541v-4h1v4zM241 553v-3h1v3zM242 541v-4h1v4zM242 553v-3h1v3zM243 541v-3h1v3zM243 553v-3h1v3zM244 541v-1h1v1zM244 553v-4h1v4zM245 541v-3h1v3zM245 553v-3h1v3zM246 541v-1h1v1zM246 553v-1h1v1zM247 541v-2h1v2zM247 553v-2h1v2zM248 541v-3h1v3zM248 553v-2h1v2zM249 541v-3h1v3zM249 553v-2h1v2zM250 541v-3h1v3zM250 553v-3h1v3zM251 541v-2h1v2zM251 553v-5h1v5zM252 541v-3h1v3zM252 553v-4h1v4zM253 541v-2h1v2zM253 553v-2h1v2zM254 541v-2h1v2zM254 553v-2h1v2zM255 541v-3h1v3zM255 553v-3h1v3zM256 541v-2h1v2zM256 553v-1h1v1zM257 541v-2h1v2zM257 553v-4h1v4zM258 541v-2h1v2zM258 553v-3h1v3zM259 541v-3h1v3zM259 553v-1h1v1zM260 541v-3h1v3zM260 553v-4h1v4zM261 541v-1h1v1zM261 553v-2h1v2zM262 541v-3h1v3zM262 553v-2h1v2zM263 541v-3h1v3zM263 553v-2h1v2zM264 541v-1h1v1zM264 553v-3h1v3zM265 541v-4h1v4zM265 553v-4h1v4zM266 541v-4h1v4zM266 553v-3h1v3zM267 541v-3h1v3zM267 553v-1h1v1zM268 541v-3h1v3zM268 553v-2h1v2zM269 541v-2h1v2zM269 553v-1h1v1zM270 541v-2h1v2zM270 553v-2h1v2zM271 541v-4h1v4zM271 553v-1h1v1zM272 541v-1h1v1zM272 553v-3h1v3zM273 541v-4h1v4zM273 553v-3h1v3zM274 541v-1h1v1zM274 553v-1h1v1zM275 541v-3h1v3zM275 553v-2h1v2zM276 541v-1h1v1zM276 553v-4h1v4zM277 541v-4h1v4zM277 553v-3h1v3zM278 541v-3h1v3zM278 553v-3h1v3zM279 541v-5h1v5zM279 553v-3h1v3zM280 541v-3h1v3zM280 553v-3h1v3zM281 541v-1h1v1zM281 553v-4h1v4zM282 541v-4h1v4zM282 553v-3h1v3zM283 541v-1h1v1zM283 553v-2h1v2zM284 541v-4h1v4zM284 553v-1h1v1zM285 541v-2h1v2zM285 553v-4h1v4zM286 541v-1h1v1zM286 553v-4h1v4zM287 541v-3h1v3zM287 553v-2h1v2zM288 541v-3h1v3zM288 553v-3h1v3zM289 541v-3h1v3zM289 553v-4h1v4zM290 541v-2h1v2zM290 553v-2h1v2zM291 541v-4h1v4zM291 553v-3h1v3zM292 541v-2h1v2zM292 553v-4h1v4zM293 541v-4h1v4zM293 553v-2h1v2zM294 541v-1h1v1zM294 553v-2h1v2zM295 541v-3h1v3zM295 553v-2h1v2zM296 541v-4h1v4zM296 553v-1h1v1zM297 541v-4h1v4zM297 553v-1h1v1zM298 541v-2h1v2zM298 553v-3h1v3zM299 541v-4h1v4zM299 553v-4h1v4zM300 541v-3h1v3zM300 553v-3h1v3zM301 541v-3h1v3zM301 553v-3h1v3zM302 541v-2h1v2zM302 553v-3h1v3zM303 541v-3h1v3zM303 553v-3h1v3zM304 541v-4h1v4zM304 553v-3h1v3zM305 541v-5h1v5zM305 553v-3h1v3zM306 541v-2h1v2zM306 553v-2h1v2zM307 541v-3h1v3zM307 553v-4h1v4zM308 541v-2h1v2zM308 553v-3h1v3zM309 541v-5h1v5zM309 553v-1h1v1zM310 541v-1h1v1zM310 553v-3h1v3zM311 541v-3h1v3zM311 553v-3h1v3zM312 541v-2h1v2zM312 553v-3h1v3zM313 541v-3h1v3zM313 553v-2h1v2zM314 541v-6h1v6zM314 553v-3h1v3zM315 541v-2h1v2zM315 553v-2h1v2zM316 541v-2h1v2zM316 553v-2h1v2zM317 541v-1h1v1zM317 553v-2h1v2zM318 541v-4h1v4zM318 553v-1h1v1zM319 541v-3h1v3zM319 553v-4h1v4zM320 541v-4h1v4zM320 553v-4h1v4zM321 541v-1h1v1zM321 553v-2h1v2zM322 541v-2h1v2zM322 553v-3h1v3zM323 541v-4h1v4zM323 553v-1h1v1zM324 541v-4h1v4zM324 553v-1h1v1zM325 541v-4h1v4zM325 553v-1h1v1zM326 541v-3h1v3zM326 553v-4h1v4zM327 541v-3h1v3zM327 553v-3h1v3zM328 541v-4h1v4zM328 553v-3h1v3zM329 541v-3h1v3zM329 553v-4h1v4zM330 541v-4h1v4zM330 553v-2h1v2zM331 541v-6h1v6zM331 553v-1h1v1zM332 541v-4h1v4zM332 553v-2h1v2zM333 541v-3h1v3zM333 553v-3h1v3zM334 541v-3h1v3zM334 553v-3h1v3zM335 541v-1h1v1zM335 553v-1h1v1zM336 541v-3h1v3zM336 553v-1h1v1zM337 541v-1h1v1zM337 553v-1h1v1zM338 541v-4h1v4zM338 553v-3h1v3zM339 541v-4h1v4zM339 553v-1h1v1zM340 541v-3h1v3zM340 553v-1h1v1zM341 541v-4h1v4zM341 553v-4h1v4zM342 541v-2h1v2zM342 553v-4h1v4zM343 541v-4h1v4zM343 553v-2h1v2zM344 541v-1h1v1zM344 553v-4h1v4zM345 541v-3h1v3zM345 553v-2h1v2zM346 541v-3h1v3zM346 553v-3h1v3zM347 541v-4h1v4zM347 553v-1h1v1zM348 541v-4h1v4zM348 553v-4h1v4zM349 541v-4h1v4zM349 553v-2h1v2zM350 541v-2h1v2zM350 553v-4h1v4zM351 541v-3h1v3zM351 553v-3h1v3zM352 541v-4h1v4zM352 553v-2h1v2zM353 541v-1h1v1zM353 553v-2h1v2zM354 541v-1h1v1zM354 553v-3h1v3zM355 541v-3h1v3zM355 553v-2h1v2zM356 541v-3h1v3zM356 553v-3h1v3zM357 541v-3h1v3zM357 553v-4h1v4zM358 541v-3h1v3zM358 553v-4h1v4zM359 541v-4h1v4zM359 553v-4h1v4zM360 541v-2h1v2zM360 553v-4h1v4zM361 541v-1h1v1zM361 553v-1h1v1zM362 541v-1h1v1zM362 553v-4h1v4zM363 541v-1h1v1zM363 553v-2h1v2zM364 541v-2h1v2zM364 553v-2h1v2zM365 541v-2h1v2zM365 553v-3h1v3zM366 541v-5h1v5zM366 553v-3h1v3zM367 541v-3h1v3zM367 553v-4h1v4zM368 541v-2h1v2zM368 553v-1h1v1zM369 541v-2h1v2zM369 553v-4h1v4zM370 541v-1h1v1zM370 553v-2h1v2zM371 541v-4h1v4zM371 553v-3h1v3zM372 541v-3h1v3zM372 553v-3h1v3zM373 541v-3h1v3zM373 553v-1h1v1zM374 541v-1h1v1zM374 553v-2h1v2zM375 541v-4h1v4zM375 553v-2h1v2zM376 541v-2h1v2zM376 553v-2h1v2zM377 541v-1h1v1zM377 553v-2h1v2zM378 541v-1h1v1zM378 553v-3h1v3zM379 541v-1h1v1zM379 553v-3h1v3zM380 541v-2h1v2zM380 553v-1h1v1zM381 541v-4h1v4zM381 553v-2h1v2zM382 541v-1h1v1zM382 553v-1h1v1zM383 541v-3h1v3zM383 553v-2h1v2zM384 541v-4h1v4zM384 553v-3h1v3zM385 541v-3h1v3zM385 553v-3h1v3zM386 541v-4h1v4zM386 553v-3h1v3zM387 541v-3h1v3zM387 553v-1h1v1zM388 541v-4h1v4zM388 553v-4h1v4zM389 541v-2h1v2zM389 553v-2h1v2zM390 541v-5h1v5zM390 553v-1h1v1zM391 541v-3h1v3zM391 553v-5h1v5zM392 541v-2h1v2zM392 553v-3h1v3zM393 541v-5h1v5zM393 553v-2h1v2zM394 541v-3h1v3zM394 553v-4h1v4zM395 541v-2h1v2zM395 553v-2h1v2zM396 541v-3h1v3zM396 553v-3h1v3zM397 541v-3h1v3zM397 553v-2h1v2zM398 541v-1h1v1zM398 553v-2h1v2zM399 541v-4h1v4zM399 553v-3h1v3zM400 541v-2h1v2zM400 553v-1h1v1zM401 541v-6h1v6zM401 553v-4h1v4zM402 541v-3h1v3zM402 553v-1h1v1zM403 541v-3h1v3zM403 553v-3h1v3zM404 541v-5h1v5zM404 553v-3h1v3zM405 541v-3h1v3zM405 553v-3h1v3zM406 541v-1h1v1zM406 553v-4h1v4zM407 541v-3h1v3zM407 553v-2h1v2zM408 541v-4h1v4zM408 553v-5h1v5zM409 541v-1h1v1zM409 553v-2h1v2zM410 541v-3h1v3zM410 553v-3h1v3zM411 541v-2h1v2zM411 553v-1h1v1zM412 541v-5h1v5zM412 553v-4h1v4zM413 541v-1h1v1zM413 553v-1h1v1zM414 541v-5h1v5zM414 553v-4h1v4zM415 541v-5h1v5zM415 553v-3h1v3zM416 541v-2h1v2zM416 553v-3h1v3zM417 541v-1h1v1zM417 553v-2h1v2zM418 541v-3h1v3zM418 553v-3h1v3zM419 553v-5h1v5zM420 553v-8h1v8zM421 553v-6h1v6zM422 553v-7h1v7zM423 553v-4h1v4zM424 553v-7h1v7zM425 553v-3h1v3zM426 553v-2h1v2zM427 553v-2h1v2zM428 553v-7h1v7zM429 553v-7h1v7zM430 553v-7h1v7zM431 553v-9h1v9zM432 553v-11h1v11zM433 553v-11h1v11zM434 553v-9h1v9zM435 553v-15h1v15zM436 553v-13h1v13zM437 553v-9h1v9zM438 553v-5h1v5zM439 553v-6h1v6zM440 553v-11h1v11zM441 553v-7h1v7zM442 553v-11h1v11zM443 553v-6h1v6zM444 553v-4h1v4zM445 553v-9h1v9zM446 553v-4h1v4zM447 553v-5h1v5zM448 553v-3h1v3zM449 553v-4h1v4zM450 553v-5h1v5zM451 553v-4h1v4zM452 553v-4h1v4zM453 553v-8h1v8zM454 553v-11h1v11zM455 553v-3h1v3zM456 553v-3h1v3zM457 553v-6h1v6zM458 553v-9h1v9zM459 553v-7h1v7zM460 553v-9h1v9zM461 553v-8h1v8zM462 553v-8h1v8zM463 553v-13h1v13zM464 553v-6h1v6zM465 553v-14h1v14zM466 553v-5h1v5zM467 553v-7h1v7zM468 553v-10h1v10zM469 553v-9h1v9zM470 553v-10h1v10zM471 553v-5h1v5zM472 553v-7h1v7zM473 553v-9h1v9zM474 553v-6h1v6zM475 553v-8h1v8zM476 553v-5h1v5zM477 553v-7h1v7zM478 553v-5h1v5zM479 553v-10h1v10zM480 553v-10h1v10zM481 553v-11h1v11zM482 553v-10h1v10zM483 553v-6h1v6zM484 553v-11h1v11zM485 553v-7h1v7zM486 553v-7h1v7zM487 553v-7h1v7zM488 553v-13h1v13zM489 553v-7h1v7zM490 553v-6h1v6zM491 553v-7h1v7zM492 553v-3h1v3zM493 553v-2h1v2zM494 553v-9h1v9zM495 553v-5h1v5zM496 553v-3h1v3zM497 553v-3h1v3zM498 553v-4h1v4zM499 553v-8h1v8zM500 553v-9h1v9zM501 553v-7h1v7zM502 553v-6h1v6zM503 553v-7h1v7zM504 553v-5h1v5zM505 553v-5h1v5zM506 553v-5h1v5zM507 553v-9h1v9zM508 553v-8h1v8zM509 553v-9h1v9zM510 553v-13h1v13zM511 553v-9h1v9zM512 553v-10h1v10zM513 553v-8h1v8zM514 553v-7h1v7zM515 553v-8h1v8zM516 553v-8h1v8zM517 553v-12h1v12zM518 553v-7h1v7zM519 553v-6h1v6zM520 553v-9h1v9zM521 553v-7h1v7zM522 553v-8h1v8zM523 553v-9h1v9zM524 553v-10h1v10zM525 553v-9h1v9zM526 553v-12h1v12zM527 553v-8h1v8zM528 553v-6h1v6zM529 553v-5h1v5zM530 553v-6h1v6zM531 553v-13h1v13zM532 553v-8h1v8zM533 553v-6h1v6zM534 553v-4h1v4zM535 553v-2h1v2zM536 553v-4h1v4zM537 553v-3h1v3zM538 553v-6h1v6zM539 553v-4h1v4zM540 553v-4h1v4zM541 553v-6h1v6zM542 553v-11h1v11zM543 553v-10h1v10zM544 553v-9h1v9zM545 553v-11h1v11zM546 553v-4h1v4zM547 553v-8h1v8zM548 553v-10h1v10zM549 553v-5h1v5zM550 553v-9h1v9zM551 553v-6h1v6zM552 553v-9h1v9zM553 553v-9h1v9zM554 553v-6h1v6zM555 553v-6h1v6zM556 553v-10h1v10zM557 553v-7h1v7zM558 553v-9h1v9zM559 553v-11h1v11zM560 553v-10h1v10zM561 553v-11h1v11zM562 553v-9h1v9zM563 553v-7h1v7zM564 553v-8h1v8zM565 553v-7h1v7zM566 553v-7h1v7zM567 553v-5h1v5zM568 553v-8h1v8zM569 553v-6h1v6zM570 553v-3h1v3zM571 553v-4h1v4zM572 553v-9h1v9zM573 553v-3h1v3zM574 553v-4h1v4zM575 553v-8h1v8zM576 553v-6h1v6zM577 553v-3h1v3zM578 553v-4h1v4zM579 553v-6h1v6zM580 553v-15h1v15zM581 553v-9h1v9zM582 553v-11h1v11zM583 553v-9h1v9zM584 553v-3h1v3zM585 553v-7h1v7zM586 553v-11h1v11zM587 553v-11h1v11zM588 553v-5h1v5zM589 553v-2h1v2zM590 553v-2h1v2zM591 553v-8h1v8zM592 553v-6h1v6zM593 553v-6h1v6zM594 553v-3h1v3zM595 553v-7h1v7zM596 553v-2h1v2zM597 553v-9h1v9zM598 553v-8h1v8zM599 553v-5h1v5zM600 553v-12h1v12zM601 553v-12h1v12zM602 553v-14h1v14zM603 553v-5h1v5zM604 553v-8h1v8zM605 553v-11h1v11zM606 553v-19h1v19zM607 553v-10h1v10zM608 553v-5h1v5zM609 553v-14h1v14zM610 553v-12h1v12zM611 553v-5h1v5zM612 553v-8h1v8zM613 553v-7h1v7zM614 553v-4h1v4zM615 553v-5h1v5zM616 553v-8h1v8zM617 553v-8h1v8zM618 553v-6h1v6zM619 553v-11h1v11zM620 553v-2h1v2zM621 553v-2h1v2zM622 553v-3h1v3zM623 553v-11h1v11zM624 553v-14h1v14zM625 553v-10h1v10zM626 553v-11h1v11zM627 553v-7h1v7zM628 553v-11h1v11zM629 553v-10h1v10zM630 553v-8h1v8zM631 553v-6h1v6zM632 553v-6h1v6zM633 553v-9h1v9zM634 553v-7h1v7zM635 553v-12h1v12zM636 553v-5h1v5zM637 553v-4h1v4zM638 553v-9h1v9zM639 553v-8h1v8zM640 553v-3h1v3zM641 553v-5h1v5zM642 553v-5h1v5zM643 553v-9h1v9zM644 553v-3h1v3zM645 553v-6h1v6zM646 553v-6h1v6zM647 553v-7h1v7zM648 553v-10h1v10zM649 553v-5h1v5zM650 553v-12h1v12zM651 553v-11h1v11zM652 553v-11h1v11zM653 553v-10h1v10zM654 553v-9h1v9zM655 553v-6h1v6zM656 553v-9h1v9zM657 553v-11h1v11zM658 553v-6h1v6zM659 553v-9h1v9zM660 553v-6h1v6zM661 553v-3h1v3zM662 553v-4h1v4zM663 553v-2h1v2zM664 553v-2h1v2zM665 553v-5h1v5zM666 553v-8h1v8zM667 553v-4h1v4zM668 553v-6h1v6zM669 553v-2h1v2zM670 553v-4h1v4zM671 553v-9h1v9zM672 553v-9h1v9zM673 553v-4h1v4zM674 553v-5h1v5zM675 553v-10h1v10zM676 553v-15h1v15zM677 553v-15h1v15zM678 553v-6h1v6zM679 553v-9h1v9zM680 553v-10h1v10zM681 553v-11h1v11zM682 553v-6h1v6zM683 553v-6h1v6zM684 553v-4h1v4zM685 553v-5h1v5zM686 553v-6h1v6zM687 553v-9h1v9zM688 553v-9h1v9zM689 553v-5h1v5zM690 553v-11h1v11zM691 553v-13h1v13zM692 553v-14h1v14zM693 553v-12h1v12zM694 553v-9h1v9zM695 553v-13h1v13zM696 553v-3h1v3zM697 553v-10h1v10zM698 553v-4h1v4zM699 553v-6h1v6zM700 553v-5h1v5zM701 553v-8h1v8zM702 553v-2h1v2zM703 553v-4h1v4zM704 553v-7h1v7zM705 553v-2h1v2zM706 553v-2h1v2zM707 553v-2h1v2zM708 553v-5h1v5zM709 553v-7h1v7zM710 553v-6h1v6zM711 553v-5h1v5zM712 553v-2h1v2zM713 553v-6h1v6zM714 553v-9h1v9zM715 553v-14h1v14zM716 553v-10h1v10zM717 553v-10h1v10zM718 553v-6h1v6zM719 553v-5h1v5zM720 553v-7h1v7zM721 553v-4h1v4zM722 553v-4h1v4zM723 553v-6h1v6zM724 553v-13h1v13zM725 553v-7h1v7zM726 553v-10h1v10zM727 553v-10h1v10zM728 553v-7h1v7zM729 553v-10h1v10zM730 553v-14h1v14zM731 553v-8h1v8zM732 553v-12h1v12zM733 553v-8h1v8zM734 553v-4h1v4zM735 553v-11h1v11zM736 553v-6h1v6zM737 553v-11h1v11zM738 553v-7h1v7zM739 553v-11h1v11zM740 553v-5h1v5zM741 553v-9h1v9zM742 553v-15h1v15zM743 553v-11h1v11zM744 553v-5h1v5zM745 553v-6h1v6zM746 553v-9h1v9zM747 553v-5h1v5zM748 553v-10h1v10zM749 553v-6h1v6zM750 553v-2h1v2zM751 553v-2h1v2zM752 553v-5h1v5zM753 553v-5h1v5zM754 553v-5h1v5zM755 553v-6h1v6zM756 553v-7h1v7zM757 553v-9h1v9zM758 553v-7h1v7zM759 553v-7h1v7zM760 553v-10h1v10zM761 553v-5h1v5zM762 553v-14h1v14zM763 553v-8h1v8zM764 553v-10h1v10zM765 553v-9h1v9zM766 553v-9h1v9zM767 553v-4h1v4zM768 553v-2h1v2zM769 553v-7h1v7zM770 553v-3h1v3zM771 553v-11h1v11zM772 553v-11h1v11zM773 553v-8h1v8zM774 553v-4h1v4zM775 553v-2h1v2zM776 553v-2h1v2zM777 553v-6h1v6zM778 553v-7h1v7zM779 553v-13h1v13zM780 553v-11h1v11zM781 553v-10h1v10zM782 553v-7h1v7zM783 553v-7h1v7zM784 553v-9h1v9zM785 553v-13h1v13zM786 553v-10h1v10zM787 553v-11h1v11zM788 553v-19h1v19zM789 553v-8h1v8zM790 553v-9h1v9zM791 553v-12h1v12zM792 553v-10h1v10zM793 553v-9h1v9zM794 553v-8h1v8zM795 553v-10h1v10zM796 553v-6h1v6zM797 553v-5h1v5zM798 553v-3h1v3zM799 553v-2h1v2zM800 553v-6h1v6zM801 553v-5h1v5zM802 553v-6h1v6zM803 553v-9h1v9zM804 553v-12h1v12zM805 553v-13h1v13zM806 553v-5h1v5zM807 553v-4h1v4zM808 553v-14h1v14zM809 553v-7h1v7zM810 553v-7h1v7zM811 553v-8h1v8zM812 553v-8h1v8zM813 553v-10h1v10zM814 553v-7h1v7zM815 553v-9h1v9zM816 553v-8h1v8zM817 553v-2h1v2zM818 553v-4h1v4zM819 553v-5h1v5zM820 553v-4h1v4zM821 553v-6h1v6zM822 553v-4h1v4zM823 553v-10h1v10zM824 553v-10h1v10zM825 553v-6h1v6zM826 553v-8h1v8zM827 553v-9h1v9zM828 553v-8h1v8zM829 553v-6h1v6zM830 553v-5h1v5zM831 553v-7h1v7zM832 553v-11h1v11zM833 553v-10h1v10zM834 553v-9h1v9zM835 553v-8h1v8zM836 553v-7h1v7zM837 553v-11h1v11zM838 553v-5h1v5zM839 553v-9h1v9zM840 553v-9h1v9zM841 553v-5h1v5zM842 553v-8h1v8zM843 553v-11h1v11zM844 553v-5h1v5zM845 553v-8h1v8zM846 553v-8h1v8zM847 553v-6h1v6zM848 553v-5h1v5zM849 553v-7h1v7zM850 553v-5h1v5zM851 553v-4h1v4zM852 553v-3h1v3zM853 553v-4h1v4zM854 553v-6h1v6zM855 553v-3h1v3zM856 553v-8h1v8zM857 553v-8h1v8zM858 553v-9h1v9zM859 553v-8h1v8zM860 553v-9h1v9zM861 553v-6h1v6zM862 553v-6h1v6zM863 553v-3h1v3zM864 553v-5h1v5zM865 553v-7h1v7zM866 553v-9h1v9zM867 553v-10h1v10zM868 553v-7h1v7zM869 553v-5h1v5zM870 553v-10h1v10zM871 553v-9h1v9zM872 553v-8h1v8zM873 553v-3h1v3zM874 553v-6h1v6zM875 553v-5h1v5zM876 553v-8h1v8zM877 553v-4h1v4zM878 553v-5h1v5zM879 553v-2h1v2zM880 553v-5h1v5zM881 553v-4h1v4zM882 553v-12h1v12zM883 553v-14h1v14zM884 553v-2h1v2zM885 553v-5h1v5zM886 553v-7h1v7zM887 553v-2h1v2zM888 553v-6h1v6zM889 553v-7h1v7zM890 553v-6h1v6zM891 553v-7h1v7zM892 553v-5h1v5zM893 553v-11h1v11zM894 553v-10h1v10zM895 553v-5h1v5zM896 553v-9h1v9zM897 553v-5h1v5zM898 553v-5h1v5zM899 553v-10h1v10zM900 553v-6h1v6zM901 553v-7h1v7zM902 553v-6h1v6zM903 553v-4h1v4zM904 553v-5h1v5zM905 553v-5h1v5zM906 553v-6h1v6zM907 553v-5h1v5zM908 553v-6h1v6zM909 553v-7h1v7zM910 553v-7h1v7zM911 553v-11h1v11zM912 553v-7h1v7zM913 553v-6h1v6zM914 553v-13h1v13zM915 553v-9h1v9zM916 553v-13h1v13zM917 553v-5h1v5zM918 553v-5h1v5zM919 553v-6h1v6zM920 553v-7h1v7zM921 553v-8h1v8zM922 553v-12h1v12zM923 553v-5h1v5zM924 553v-7h1v7zM925 553v-9h1v9zM926 553v-12h1v12zM927 553v-5h1v5zM928 553v-5h1v5zM929 553v-8h1v8zM930 553v-9h1v9zM931 553v-5h1v5zM932 553v-2h1v2zM933 553v-3h1v3zM934 553v-7h1v7zM935 553v-6h1v6zM936 553v-9h1v9zM937 553v-4h1v4zM938 553v-11h1v11zM939 553v-10h1v10zM940 553v-8h1v8zM941 553v-7h1v7zM942 553v-11h1v11zM943 553v-11h1v11zM944 553v-8h1v8zM945 553v-2h1v2zM946 553v-13h1v13zM947 553v-6h1v6zM948 553v-7h1v7zM949 553v-7h1v7zM950 553v-8h1v8zM951 553v-7h1v7zM952 553v-2h1v2zM953 553v-7h1v7zM954 553v-10h1v10zM955 553v-6h1v6zM956 553v-8h1v8zM957 553v-7h1v7zM958 553v-6h1v6zM959 553v-5h1v5zM960 553v-2h1v2zM961 553v-6h1v6zM962 553v-7h1v7zM963 553v-10h1v10zM964 553v-11h1v11zM965 553v-6h1v6zM966 553v-9h1v9zM967 553v-12h1v12zM968 553v-4h1v4zM969 553v-6h1v6zM970 553v-3h1v3zM971 553v-6h1v6zM972 553v-8h1v8zM973 553v-4h1v4zM974 553v-9h1v9zM975 553v-7h1v7zM976 553v-3h1v3zM977 553v-8h1v8zM978 553v-7h1v7zM979 553v-6h1v6zM980 553v-14h1v14zM981 553v-9h1v9zM982 553v-8h1v8zM983 553v-10h1v10zM984 553v-10h1v10zM985 553v-9h1v9zM986 553v-7h1v7zM987 553v-3h1v3zM988 553v-3h1v3zM989 553v-5h1v5zM990 553v-12h1v12zM991 553v-10h1v10zM992 553v-8h1v8zM993 553v-8h1v8zM994 553v-3h1v3zM995 553v-9h1v9zM996 553v-6h1v6zM997 553v-6h1v6zM998 553v-12h1v12zM999 553v-10h1v10zM1000 553v-13h1v13zM1001 553v-6h1v6zM1002 553v-8h1v8zM1003 553v-9h1v9zM1004 553v-2h1v2zM1005 553v-2h1v2zM1006 553v-2h1v2zM1007 553v-2h1v2zM1008 553v-7h1v7zM1009 553v-3h1v3zM1010 553v-8h1v8zM1011 553v-5h1v5zM1012 553v-13h1v13zM1013 553v-4h1v4zM1014 553v-6h1v6zM1015 553v-4h1v4zM1016 553v-8h1v8zM1017 553v-2h1v2zM1018 553v-7h1v7zM1019 553v-4h1v4zM1020 553v-8h1v8zM1021 553v-6h1v6zM1022 553v-4h1v4zM1023 553v-5h1v5zM1024 553v-6h1v6zM1025 553v-7h1v7zM1026 553v-8h1v8zM1027 553v-9h1v9zM1028 553v-10h1v10zM1029 553v-6h1v6zM1030 553v-8h1v8zM1031 553v-4h1v4zM1032 553v-7h1v7zM1033 553v-6h1v6zM1034 553v-3h1v3zM1035 553v-4h1v4zM1036 553v-5h1v5zM1037 553v-5h1v5zM1038 553v-6h1v6zM1039 553v-5h1v5zM1040 553v-10h1v10zM1041 553v-10h1v10zM1042 553v-9h1v9zM1043 553v-4h1v4zM1044 553v-6h1v6zM1045 553v-5h1v5zM1046 553v-7h1v7zM1047 553v-9h1v9zM1048 553v-11h1v11zM1049 553v-10h1v10zM1050 553v-10h1v10zM1051 553v-6h1v6zM1052 553v-10h1v10zM1053 553v-7h1v7zM1054 553v-9h1v9zM1055 553v-11h1v11zM1056 553v-2h1v2zM1057 553v-5h1v5zM1058 553v-5h1v5zM1059 553v-19h1v19zM1060 553v-14h1v14zM1061 553v-8h1v8zM1062 553v-4h1v4zM1063 553v-10h1v10zM1064 553v-5h1v5zM1065 553v-13h1v13zM1066 553v-13h1v13zM1067 553v-13h1v13zM1068 553v-8h1v8zM1069 553v-8h1v8zM1070 553v-9h1v9zM1071 553v-15h1v15zM1072 553v-6h1v6zM1073 553v-3h1v3zM1074 553v-2h1v2zM1075 553v-4h1v4zM1076 553v-5h1v5zM1077 553v-5h1v5zM1078 553v-8h1v8zM1079 553v-7h1v7zM1080 553v-7h1v7zM1081 553v-4h1v4zM1082 553v-10h1v10zM1083 553v-2h1v2zM1084 553v-3h1v3zM1085 553v-2h1v2zM1086 553v-2h1v2zM1087 553v-8h1v8zM1088 553v-3h1v3zM1089 553v-6h1v6zM1090 553v-6h1v6zM1091 553v-5h1v5zM1092 553v-6h1v6zM1093 553v-6h1v6zM1094 553v-9h1v9zM1095 553v-7h1v7zM1096 553v-4h1v4zM1097 553v-5h1v5zM1098 553v-5h1v5zM1099 553v-6h1v6zM1100 553v-8h1v8zM1101 553v-7h1v7zM1102 553v-2h1v2zM1103 553v-4h1v4zM1104 553v-5h1v5zM1105 553v-4h1v4zM1106 553v-4h1v4zM1107 553v-8h1v8zM1108 553v-8h1v8zM1109 553v-4h1v4zM1110 553v-9h1v9zM1111 553v-7h1v7zM1112 553v-6h1v6zM1113 553v-2h1v2zM1114 553v-3h1v3zM1115 553v-7h1v7zM1116 553v-8h1v8zM1117 553v-11h1v11zM1118 553v-12h1v12zM1119 553v-13h1v13zM1120 553v-18h1v18zM1121 553v-9h1v9zM1122 553v-7h1v7zM1123 553v-10h1v10zM1124 553v-8h1v8zM1125 553v-6h1v6zM1126 553v-4h1v4zM1127 553v-12h1v12zM1128 553v-5h1v5zM1129 553v-8h1v8zM1130 553v-5h1v5zM1131 553v-9h1v9zM1132 553v-4h1v4zM1133 553v-4h1v4zM1134 553v-5h1v5zM1135 553v-7h1v7zM1136 553v-7h1v7zM1137 553v-4h1v4zM1138 553v-11h1v11zM1139 553v-18h1v18zM1140 553v-9h1v9zM1141 553v-6h1v6zM1142 553v-6h1v6zM1143 553v-7h1v7zM1144 553v-9h1v9zM1145 553v-5h1v5zM1146 553v-6h1v6zM1147 553v-9h1v9zM1148 553v-6h1v6zM1149 553v-3h1v3zM1150 553v-6h1v6zM1151 553v-6h1v6zM1152 553v-2h1v2zM1153 553v-4h1v4zM1154 553v-8h1v8zM1155 553v-6h1v6zM1156 553v-2h1v2zM1157 553v-8h1v8zM1158 553v-10h1v10zM1159 553v-6h1v6zM1160 553v-8h1v8zM1161 553v-7h1v7zM1162 553v-4h1v4zM1163 553v-8h1v8zM1164 553v-9h1v9zM1165 553v-11h1v11zM1166 553v-12h1v12zM1167 553v-5h1v5zM1168 553v-14h1v14zM1169 553v-5h1v5zM1170 553v-4h1v4zM1171 553v-5h1v5zM1172 553v-7h1v7zM1173 553v-6h1v6zM1174 553v-7h1v7zM1175 553v-7h1v7zM1176 553v-5h1v5zM1177 553v-8h1v8zM1178 553v-10h1v10zM1179 553v-6h1v6zM1180 553v-11h1v11zM1181 553v-12h1v12zM1182 553v-11h1v11zM1183 553v-8h1v8zM1184 553v-8h1v8zM1185 553v-8h1v8zM1186 553v-11h1v11zM1187 553v-12h1v12zM1188 553v-11h1v11zM1189 553v-4h1v4zM1190 553v-4h1v4zM1191 553v-7h1v7zM1192 553v-3h1v3zM1193 553v-11h1v11zM1194 553v-8h1v8zM1195 553v-5h1v5zM1196 553v-6h1v6zM1197 553v-7h1v7zM1198 553v-2h1v2zM1199 553v-10h1v10zM1200 553v-10h1v10zM1201 553v-3h1v3zM1202 553v-8h1v8zM1203 553v-7h1v7zM1204 553v-13h1v13zM1205 553v-10h1v10zM1206 553v-8h1v8zM1207 553v-9h1v9zM1208 553v-5h1v5zM1209 553v-3h1v3zM1210 553v-6h1v6zM1211 553v-12h1v12zM1212 553v-6h1v6zM1213 553v-6h1v6zM1214 553v-10h1v10zM1215 553v-8h1v8zM1216 553v-5h1v5zM1217 553v-4h1v4zM1218 553v-4h1v4zM1219 553v-3h1v3zM1220 553v-2h1v2zM1221 553v-8h1v8zM1222 553v-5h1v5zM1223 553v-7h1v7zM1224 553v-8h1v8zM1225 553v-7h1v7zM1226 553v-6h1v6zM1227 553v-10h1v10zM1228 553v-2h1v2zM1229 553v-4h1v4zM1230 553v-5h1v5zM1231 553v-5h1v5zM1232 553v-5h1v5zM1233 553v-6h1v6zM1234 553v-8h1v8zM1235 553v-5h1v5zM1236 553v-2h1v2zM1237 553v-3h1v3zM1238 553v-6h1v6zM1239 553v-10h1v10zM1240 553v-2h1v2zM1241 553v-8h1v8zM1242 553v-4h1v4zM1243 553v-9h1v9zM1244 553v-10h1v10zM1245 553v-9h1v9zM1246 553v-4h1v4zM1247 553v-4h1v4zM1248 553v-2h1v2zM1249 553v-6h1v6zM1250 553v-5h1v5zM1251 553v-13h1v13zM1252 553v-14h1v14zM1253 553v-10h1v10zM1254 553v-7h1v7zM1255 553v-7h1v7zM1256 553v-10h1v10zM1257 553v-16h1v16zM1258 553v-8h1v8zM1259 553v-5h1v5zM1260 553v-10h1v10zM1261 553v-8h1v8zM1262 553v-7h1v7zM1263 553v-4h1v4zM1264 553v-6h1v6zM1265 553v-3h1v3zM1266 553v-7h1v7zM1267 553v-9h1v9zM1268 553v-9h1v9zM1269 553v-12h1v12zM1270 553v-10h1v10zM1271 553v-13h1v13zM1272 553v-8h1v8zM1273 553v-7h1v7zM1274 553v-2h1v2zM1275 553v-2h1v2zM1276 553v-2h1v2zM1277 553v-9h1v9zM1278 553v-10h1v10zM1279 553v-7h1v7zM1280 553v-11h1v11zM1281 553v-7h1v7zM1282 553v-9h1v9zM1283 553v-3h1v3zM1284 553v-8h1v8zM1285 553v-10h1v10zM1286 553v-6h1v6zM1287 553v-5h1v5zM1288 553v-4h1v4zM1289 553v-8h1v8zM1290 553v-12h1v12zM1291 553v-13h1v13zM1292 553v-6h1v6zM1293 553v-9h1v9zM1294 553v-8h1v8zM1295 553v-10h1v10zM1296 553v-8h1v8zM1297 553v-7h1v7zM1298 553v-11h1v11zM1299 553v-12h1v12zM1300 553v-13h1v13zM1301 553v-7h1v7zM1302 553v-8h1v8zM1303 553v-7h1v7zM1304 553v-6h1v6zM1305 553v-6h1v6zM1306 553v-9h1v9zM1307 553v-4h1v4zM1308 553v-7h1v7zM1309 553v-2h1v2zM1310 553v-5h1v5zM1311 553v-3h1v3zM1312 553v-2h1v2zM1313 553v-6h1v6zM1314 553v-3h1v3zM1315 553v-12h1v12zM1316 553v-9h1v9zM1317 553v-10h1v10zM1318 553v-10h1v10zM1319 553v-8h1v8zM1320 553v-9h1v9zM1321 553v-9h1v9zM1322 553v-5h1v5zM1323 553v-8h1v8zM1324 553v-7h1v7zM1325 553v-2h1v2zM1326 553v-2h1v2zM1327 553v-11h1v11zM1328 553v-2h1v2zM1329 553v-2h1v2zM1330 553v-13h1v13zM1331 553v-8h1v8zM1332 553v-3h1v3zM1333 553v-9h1v9zM1334 553v-6h1v6zM1335 553v-9h1v9zM1336 553v-9h1v9zM1337 553v-5h1v5zM1338 553v-8h1v8zM1339 553v-7h1v7zM1340 553v-9h1v9zM1341 553v-7h1v7zM1342 553v-6h1v6zM1343 553v-8h1v8zM1344 553v-16h1v16zM1345 553v-14h1v14zM1346 553v-13h1v13zM1347 553v-8h1v8zM1348 553v-8h1v8zM1349 553v-8h1v8zM1350 553v-4h1v4zM1351 553v-2h1v2zM1352 553v-5h1v5zM1353 553v-7h1v7zM1354 553v-9h1v9zM1355 553v-7h1v7zM1356 553v-8h1v8zM1357 553v-8h1v8zM1358 553v-10h1v10zM1359 553v-9h1v9zM1360 553v-10h1v10zM1361 553v-7h1v7zM1362 553v-7h1v7zM1363 553v-7h1v7zM1364 553v-9h1v9zM1365 553v-10h1v10zM1366 553v-12h1v12zM1367 553v-8h1v8zM1368 553v-11h1v11zM1369 553v-8h1v8zM1370 553v-11h1v11zM1371 553v-14h1v14zM1372 553v-8h1v8zM1373 553v-2h1v2zM1374 553v-3h1v3zM1375 553v-10h1v10zM1376 553v-12h1v12zM1377 553v-16h1v16zM1378 553v-9h1v9zM1379 553v-9h1v9zM1380 553v-9h1v9zM1381 553v-8h1v8zM1382 553v-4h1v4zM1383 553v-2h1v2zM1384 553v-14h1v14zM1385 553v-7h1v7zM1386 553v-10h1v10zM1387 553v-9h1v9zM1388 553v-11h1v11zM1389 553v-7h1v7zM1390 553v-14h1v14zM1391 553v-8h1v8zM1392 553v-4h1v4zM1393 553v-3h1v3zM1394 553v-8h1v8zM1395 553v-6h1v6zM1396 553v-8h1v8zM1397 553v-4h1v4zM1398 553v-3h1v3zM1399 553v-7h1v7zM1400 553v-8h1v8zM1401 553v-11h1v11zM1402 553v-8h1v8zM1403 553v-6h1v6zM1404 553v-6h1v6zM1405 553v-2h1v2zM1406 553v-9h1v9zM1407 553v-6h1v6zM1408 553v-11h1v11zM1409 553v-5h1v5zM1410 553v-14h1v14zM1411 553v-9h1v9zM1412 553v-13h1v13zM1413 553v-9h1v9zM1414 553v-9h1v9zM1415 553v-7h1v7zM1416 553v-9h1v9zM1417 553v-5h1v5zM1418 553v-7h1v7zM1419 553v-5h1v5zM1420 553v-10h1v10zM1421 553v-6h1v6zM1422 553v-5h1v5zM1423 553v-5h1v5zM1424 553v-8h1v8zM1425 553v-10h1v10zM1426 553v-4h1v4zM1427 553v-8h1v8zM1428 553v-9h1v9zM1429 553v-2h1v2zM1430 553v-13h1v13zM1431 553v-7h1v7zM1432 553v-9h1v9zM1433 553v-12h1v12zM1434 553v-6h1v6zM1435 553v-10h1v10zM1436 553v-6h1v6zM1437 553v-3h1v3zM1438 553v-9h1v9zM1439 553v-7h1v7zM1440 553v-10h1v10zM1441 553v-13h1v13zM1442 553v-6h1v6zM1443 553v-18h1v18zM1444 553v-8h1v8zM1445 553v-11h1v11zM1446 553v-12h1v12zM1447 553v-10h1v10zM1448 553v-10h1v10zM1449 553v-3h1v3zM1450 553v-2h1v2zM1451 553v-10h1v10zM1452 553v-6h1v6zM1453 553v-7h1v7zM1454 553v-11h1v11zM1455 553v-6h1v6zM1456 553v-9h1v9zM1457 553v-9h1v9zM1458 553v-9h1v9zM1459 553v-7h1v7zM1460 553v-5h1v5zM1461 553v-9h1v9zM1462 553v-3h1v3zM1463 553v-4h1v4zM1464 553v-4h1v4zM1465 553v-5h1v5zM1466 553v-9h1v9zM1467 553v-14h1v14zM1468 553v-10h1v10zM1469 553v-9h1v9zM1470 553v-7h1v7zM1471 553v-8h1v8zM1472 553v-5h1v5zM1473 553v-7h1v7zM1474 553v-7h1v7zM1475 553v-6h1v6zM1476 553v-4h1v4zM1477 553v-4h1v4zM1478 553v-8h1v8zM1479 553v-11h1v11zM1480 553v-8h1v8zM1481 553v-6h1v6zM1482 553v-7h1v7zM1483 553v-6h1v6zM1484 553v-8h1v8zM1485 553v-9h1v9zM1486 553v-14h1v14zM1487 553v-8h1v8zM1488 553v-5h1v5zM1489 553v-8h1v8zM1490 553v-9h1v9zM1491 553v-8h1v8zM1492 553v-6h1v6zM1493 553v-4h1v4zM1494 553v-7h1v7zM1495 553v-8h1v8zM1496 553v-2h1v2zM1497 553v-2h1v2zM1498 553v-8h1v8zM1499 553v-7h1v7zM1500 553v-6h1v6zM1501 553v-2h1v2zM1502 553v-6h1v6zM1503 553v-4h1v4zM1504 553v-7h1v7zM1505 553v-9h1v9zM1506 553v-2h1v2zM1507 553v-3h1v3zM1508 553v-2h1v2zM1509 553v-4h1v4zM1510 553v-10h1v10zM1511 553v-7h1v7zM1512 553v-9h1v9zM1513 553v-5h1v5zM1514 553v-8h1v8zM1515 553v-3h1v3zM1516 553v-3h1v3zM1517 553v-11h1v11zM1518 553v-5h1v5zM1519 553v-6h1v6zM1520 553v-4h1v4zM1521 553v-4h1v4zM1522 553v-6h1v6zM1523 553v-6h1v6zM1524 553v-13h1v13zM1525 553v-13h1v13zM1526 553v-4h1v4zM1527 553v-2h1v2zM1528 553v-4h1v4zM1529 553v-5h1v5zM1530 553v-2h1v2zM1531 553v-4h1v4zM1532 553v-7h1v7zM1533 553v-2h1v2zM1534 553v-4h1v4zM1535 553v-11h1v11zM1536 553v-11h1v11zM1537 553v-11h1v11zM1538 553v-6h1v6zM1539 553v-7h1v7zM1540 553v-10h1v10zM1541 553v-11h1v11zM1542 553v-12h1v12zM1543 553v-13h1v13zM1544 553v-6h1v6zM1545 553v-10h1v10zM1546 553v-9h1v9zM1547 553v-5h1v5zM1548 553v-8h1v8zM1549 553v-11h1v11zM1550 553v-8h1v8zM1551 553v-12h1v12zM1552 553v-5h1v5zM1553 553v-6h1v6zM1554 553v-7h1v7zM1555 553v-5h1v5z"/>
<rect x="273" y="529" width="1" height="24" fill="#26303f"/>
<rect x="305" y="529" width="1" height="24" fill="#26303f"/>
<rect x="342" y="529" width="1" height="24" fill="#26303f"/>
<rect x="361" y="529" width="1" height="24" fill="#26303f"/>
<rect x="388" y="529" width="1" height="24" fill="#26303f"/>
<rect x="418" y="529" width="1" height="24" fill="#26303f"/>
<rect x="444.5" y="529" width="1" height="24" fill="#26303f"/>
<rect x="490" y="529" width="1" height="24" fill="#26303f"/>
<rect x="499" y="529" width="1" height="24" fill="#26303f"/>
<rect x="527" y="529" width="1" height="24" fill="#26303f"/>
<rect x="559" y="529" width="1" height="24" fill="#26303f"/>
<rect x="629" y="529" width="1" height="24" fill="#26303f"/>
<rect x="657" y="529" width="1" height="24" fill="#26303f"/>
<rect x="680" y="529" width="1" height="24" fill="#26303f"/>
<rect x="725" y="529" width="1" height="24" fill="#26303f"/>
<rect x="783" y="529" width="1" height="24" fill="#26303f"/>
<rect x="865" y="529" width="1" height="24" fill="#26303f"/>
<rect x="884" y="529" width="1" height="24" fill="#26303f"/>
<rect x="928" y="529" width="1" height="24" fill="#26303f"/>
<rect x="940" y="529" width="1" height="24" fill="#26303f"/>
<rect x="952" y="529" width="1" height="24" fill="#26303f"/>
<rect x="1008" y="529" width="1" height="24" fill="#26303f"/>
<rect x="1033" y="529" width="1" height="24" fill="#26303f"/>
<rect x="1057" y="529" width="1" height="24" fill="#26303f"/>
<rect x="1109" y="529" width="1" height="24" fill="#26303f"/>
<rect x="1126" y="529" width="1" height="24" fill="#26303f"/>
<rect x="1145" y="529" width="1" height="24" fill="#26303f"/>
<rect x="1172" y="529" width="1" height="24" fill="#26303f"/>
<rect x="1217" y="529" width="1" height="24" fill="#26303f"/>
<rect x="1249" y="529" width="1" height="24" fill="#26303f"/>
<rect x="1261" y="529" width="1" height="24" fill="#26303f"/>
<rect x="1302" y="529" width="1" height="24" fill="#26303f"/>
<rect x="1353" y="529" width="1" height="24" fill="#26303f"/>
<rect x="1377" y="529" width="1" height="24" fill="#26303f"/>
<rect x="1397" y="529" width="1" height="24" fill="#26303f"/>
<rect x="1420" y="529" width="1" height="24" fill="#26303f"/>
<rect x="1433" y="529" width="1" height="24" fill="#26303f"/>
<rect x="1455" y="529" width="1" height="24" fill="#26303f"/>
<rect x="1465" y="529" width="1" height="24" fill="#26303f"/>
<rect x="1495" y="529" width="1" height="24" fill="#26303f"/>
<rect x="1540" y="529" width="1" height="24" fill="#26303f"/>
<rect x="248.5" y="533" width="10.7" height="9.8" fill="#6c6c6c" stroke="#b4b4b4" stroke-width="1"/>
<text x="253.9" y="541.2" fill="#3c3c3c" font-size="9.2" font-style="italic" text-anchor="middle" letter-spacing="-0.3">fx</text>
<rect x="284.5" y="533" width="10.7" height="9.8" fill="#6c6c6c" stroke="#b4b4b4" stroke-width="1"/>
<text x="289.9" y="541.2" fill="#3c3c3c" font-size="9.2" font-style="italic" text-anchor="middle" letter-spacing="-0.3">fx</text>
<rect x="316.5" y="533" width="10.7" height="9.8" fill="#6c6c6c" stroke="#b4b4b4" stroke-width="1"/>
<text x="321.9" y="541.2" fill="#3c3c3c" font-size="9.2" font-style="italic" text-anchor="middle" letter-spacing="-0.3">fx</text>
<rect x="399.5" y="533" width="10.7" height="9.8" fill="#6c6c6c" stroke="#b4b4b4" stroke-width="1"/>
<text x="404.9" y="541.2" fill="#3c3c3c" font-size="9.2" font-style="italic" text-anchor="middle" letter-spacing="-0.3">fx</text>
<rect x="456" y="533" width="10.7" height="9.8" fill="#6c6c6c" stroke="#b4b4b4" stroke-width="1"/>
<text x="461.4" y="541.2" fill="#3c3c3c" font-size="9.2" font-style="italic" text-anchor="middle" letter-spacing="-0.3">fx</text>
<rect x="538.5" y="533" width="10.7" height="9.8" fill="#6c6c6c" stroke="#b4b4b4" stroke-width="1"/>
<text x="543.9" y="541.2" fill="#3c3c3c" font-size="9.2" font-style="italic" text-anchor="middle" letter-spacing="-0.3">fx</text>
<rect x="570.5" y="533" width="10.7" height="9.8" fill="#6c6c6c" stroke="#b4b4b4" stroke-width="1"/>
<text x="575.9" y="541.2" fill="#3c3c3c" font-size="9.2" font-style="italic" text-anchor="middle" letter-spacing="-0.3">fx</text>
<rect x="691.5" y="533" width="10.7" height="9.8" fill="#6c6c6c" stroke="#b4b4b4" stroke-width="1"/>
<text x="696.9" y="541.2" fill="#3c3c3c" font-size="9.2" font-style="italic" text-anchor="middle" letter-spacing="-0.3">fx</text>
<rect x="736.5" y="533" width="10.7" height="9.8" fill="#6c6c6c" stroke="#b4b4b4" stroke-width="1"/>
<text x="741.9" y="541.2" fill="#3c3c3c" font-size="9.2" font-style="italic" text-anchor="middle" letter-spacing="-0.3">fx</text>
<rect x="794.5" y="533" width="10.7" height="9.8" fill="#6c6c6c" stroke="#b4b4b4" stroke-width="1"/>
<text x="799.9" y="541.2" fill="#3c3c3c" font-size="9.2" font-style="italic" text-anchor="middle" letter-spacing="-0.3">fx</text>
<rect x="896" y="533" width="10.7" height="9.8" fill="#6c6c6c" stroke="#b4b4b4" stroke-width="1"/>
<text x="901.4" y="541.2" fill="#3c3c3c" font-size="9.2" font-style="italic" text-anchor="middle" letter-spacing="-0.3">fx</text>
<rect x="963.5" y="533" width="10.7" height="9.8" fill="#6c6c6c" stroke="#b4b4b4" stroke-width="1"/>
<text x="968.9" y="541.2" fill="#3c3c3c" font-size="9.2" font-style="italic" text-anchor="middle" letter-spacing="-0.3">fx</text>
<rect x="1068.5" y="533" width="10.7" height="9.8" fill="#6c6c6c" stroke="#b4b4b4" stroke-width="1"/>
<text x="1073.9" y="541.2" fill="#3c3c3c" font-size="9.2" font-style="italic" text-anchor="middle" letter-spacing="-0.3">fx</text>
<rect x="1183.9" y="533" width="10.7" height="9.8" fill="#6c6c6c" stroke="#b4b4b4" stroke-width="1"/>
<text x="1189.3" y="541.2" fill="#3c3c3c" font-size="9.2" font-style="italic" text-anchor="middle" letter-spacing="-0.3">fx</text>
<rect x="1229.1" y="533" width="10.7" height="9.8" fill="#6c6c6c" stroke="#b4b4b4" stroke-width="1"/>
<text x="1234.5" y="541.2" fill="#3c3c3c" font-size="9.2" font-style="italic" text-anchor="middle" letter-spacing="-0.3">fx</text>
<rect x="1272.5" y="533" width="10.7" height="9.8" fill="#6c6c6c" stroke="#b4b4b4" stroke-width="1"/>
<text x="1277.9" y="541.2" fill="#3c3c3c" font-size="9.2" font-style="italic" text-anchor="middle" letter-spacing="-0.3">fx</text>
<rect x="1313.5" y="533" width="10.7" height="9.8" fill="#6c6c6c" stroke="#b4b4b4" stroke-width="1"/>
<text x="1318.9" y="541.2" fill="#3c3c3c" font-size="9.2" font-style="italic" text-anchor="middle" letter-spacing="-0.3">fx</text>
<rect x="1476.8" y="533" width="10.7" height="9.8" fill="#6c6c6c" stroke="#b4b4b4" stroke-width="1"/>
<text x="1482.2" y="541.2" fill="#3c3c3c" font-size="9.2" font-style="italic" text-anchor="middle" letter-spacing="-0.3">fx</text>
<rect x="1506.7" y="533" width="10.7" height="9.8" fill="#6c6c6c" stroke="#b4b4b4" stroke-width="1"/>
<text x="1512.1" y="541.2" fill="#3c3c3c" font-size="9.2" font-style="italic" text-anchor="middle" letter-spacing="-0.3">fx</text>
<rect x="276" y="554" width="12.4" height="24" fill="#1b6b50"/>
<rect x="276" y="577" width="12.4" height="1" fill="#2ad69b"/>
<rect x="276" y="565" width="12.4" height="1" fill="#2ad69b"/>
<rect x="276" y="555" width="1" height="23" fill="#2ad69b"/>
<polygon points="277,565 277,559 278,561 279,563 280,565" fill="#2ad69b"/>
<polygon points="277,577 277,571 278,573 279,575 280,577" fill="#2ad69b"/>
<polygon points="276,554 280,554 276,558" fill="#e4e4dc"/>
<rect x="303" y="554" width="3" height="24" fill="#1b6b50"/>
<rect x="303" y="577" width="3" height="1" fill="#2ad69b"/>
<rect x="303" y="565" width="3" height="1" fill="#2ad69b"/>
<rect x="303" y="555" width="1" height="23" fill="#2ad69b"/>
<polygon points="303,554 306,554 303,558" fill="#e4e4dc"/>
<rect x="339" y="554" width="3" height="24" fill="#1b6b50"/>
<rect x="339" y="577" width="3" height="1" fill="#2ad69b"/>
<rect x="339" y="565" width="3" height="1" fill="#2ad69b"/>
<rect x="339" y="555" width="1" height="23" fill="#2ad69b"/>
<polygon points="339,554 342,554 339,558" fill="#e4e4dc"/>
<rect x="385" y="554" width="3.4" height="24" fill="#1b6b50"/>
<rect x="385" y="577" width="3.4" height="1" fill="#2ad69b"/>
<rect x="385" y="565" width="3.4" height="1" fill="#2ad69b"/>
<rect x="385" y="555" width="1" height="23" fill="#2ad69b"/>
<polygon points="385,554 388.4,554 385,558" fill="#e4e4dc"/>
<rect x="487" y="554" width="3" height="24" fill="#1b6b50"/>
<rect x="487" y="577" width="3" height="1" fill="#2ad69b"/>
<rect x="487" y="565" width="3" height="1" fill="#2ad69b"/>
<rect x="487" y="555" width="1" height="23" fill="#2ad69b"/>
<polygon points="487,554 490,554 487,558" fill="#e4e4dc"/>
<rect x="628" y="554" width="2.4" height="24" fill="#7b3f7b"/>
<rect x="628" y="577" width="2.4" height="1" fill="#e884e8"/>
<rect x="628" y="565" width="2.4" height="1" fill="#e884e8"/>
<polygon points="628,554 630.4,554 628,558" fill="#e4e4dc"/>
<rect x="877" y="554" width="18.4" height="24" fill="#7b3f7b"/>
<rect x="877" y="577" width="18.4" height="1" fill="#e884e8"/>
<rect x="877" y="565" width="18.4" height="1" fill="#e884e8"/>
<rect x="877" y="555" width="1" height="23" fill="#e884e8"/>
<polygon points="881.2,565 883.2,563.5 885.2,562.5 888.2,562.5 889.7,564 891.2,565" fill="#e884e8"/>
<polygon points="881.2,577 883.2,575.5 885.2,574.5 888.2,574.5 889.7,576 891.2,577" fill="#e884e8"/>
<polygon points="877,554 881,554 877,558" fill="#e4e4dc"/>
<rect x="1006" y="554" width="3" height="24" fill="#7b3f7b"/>
<rect x="1006" y="577" width="3" height="1" fill="#e884e8"/>
<rect x="1006" y="565" width="3" height="1" fill="#e884e8"/>
<polygon points="1006,554 1009,554 1006,558" fill="#e4e4dc"/>
<rect x="1031" y="554" width="3" height="24" fill="#7b3f7b"/>
<rect x="1031" y="577" width="3" height="1" fill="#e884e8"/>
<rect x="1031" y="565" width="3" height="1" fill="#e884e8"/>
<polygon points="1031,554 1034,554 1031,558" fill="#e4e4dc"/>
<rect x="1126" y="554" width="1" height="24" fill="#7b3f7b"/>
<rect x="1126" y="577" width="1" height="1" fill="#e884e8"/>
<rect x="1126" y="565" width="1" height="1" fill="#e884e8"/>
<polygon points="1126,554 1128,554 1126,558" fill="#e4e4dc"/>
<rect x="1170" y="554" width="3" height="24" fill="#7b3f7b"/>
<rect x="1170" y="577" width="3" height="1" fill="#e884e8"/>
<rect x="1170" y="565" width="3" height="1" fill="#e884e8"/>
<polygon points="1170,554 1173,554 1170,558" fill="#e4e4dc"/>
<rect x="1325" y="554" width="18" height="24" fill="#1b6b50"/>
<rect x="1325" y="577" width="18" height="1" fill="#2ad69b"/>
<rect x="1325" y="565" width="18" height="1" fill="#2ad69b"/>
<rect x="1325" y="555" width="1" height="23" fill="#2ad69b"/>
<polygon points="1326,565 1326,559 1327,561 1328,563 1329,565" fill="#2ad69b"/>
<polygon points="1326,577 1326,571 1327,573 1328,575 1329,577" fill="#2ad69b"/>
<polygon points="1325,554 1329,554 1325,558" fill="#e4e4dc"/>
<rect x="1352" y="554" width="3" height="24" fill="#7b3f7b"/>
<rect x="1352" y="577" width="3" height="1" fill="#e884e8"/>
<rect x="1352" y="565" width="3" height="1" fill="#e884e8"/>
<polygon points="1352,554 1355,554 1352,558" fill="#e4e4dc"/>
<rect x="1494" y="554" width="3" height="24" fill="#7b3f7b"/>
<rect x="1494" y="577" width="3" height="1" fill="#e884e8"/>
<rect x="1494" y="565" width="3" height="1" fill="#e884e8"/>
<polygon points="1494,554 1497,554 1494,558" fill="#e4e4dc"/>
<rect x="258" y="579" width="12" height="24" fill="#1b6b50"/>
<rect x="258" y="602" width="12" height="1" fill="#2ad69b"/>
<rect x="258" y="590" width="12" height="1" fill="#2ad69b"/>
<rect x="258" y="580" width="1" height="23" fill="#2ad69b"/>
<polygon points="259,590 259,584 260,586 261,588 262,590" fill="#2ad69b"/>
<polygon points="259,602 259,596 260,598 261,600 262,602" fill="#2ad69b"/>
<polygon points="258,579 262,579 258,583" fill="#e4e4dc"/>
<rect x="343" y="579" width="19" height="24" fill="#1b6b50"/>
<rect x="343" y="602" width="19" height="1" fill="#2ad69b"/>
<rect x="343" y="590" width="19" height="1" fill="#2ad69b"/>
<rect x="343" y="580" width="1" height="23" fill="#2ad69b"/>
<polygon points="344,590 344,584 345,586 346,588 347,590" fill="#2ad69b"/>
<polygon points="344,602 344,596 345,598 346,600 347,602" fill="#2ad69b"/>
<polygon points="343,579 347,579 343,583" fill="#e4e4dc"/>
<rect x="419" y="579" width="18" height="24" fill="#1b6b50"/>
<rect x="419" y="602" width="18" height="1" fill="#2ad69b"/>
<rect x="419" y="590" width="18" height="1" fill="#2ad69b"/>
<rect x="419" y="580" width="1" height="23" fill="#2ad69b"/>
<polygon points="420,590 420,584 421,586 422,588 423,590" fill="#2ad69b"/>
<polygon points="420,602 420,596 421,598 422,600 423,602" fill="#2ad69b"/>
<polygon points="419,579 423,579 419,583" fill="#e4e4dc"/>
<rect x="726" y="579" width="12" height="24" fill="#1b6b50"/>
<rect x="726" y="602" width="12" height="1" fill="#2ad69b"/>
<rect x="726" y="590" width="12" height="1" fill="#2ad69b"/>
<rect x="726" y="580" width="1" height="23" fill="#2ad69b"/>
<polygon points="727,590 727,584 728,586 729,588 730,590" fill="#2ad69b"/>
<polygon points="727,602 727,596 728,598 729,600 730,602" fill="#2ad69b"/>
<polygon points="726,579 730,579 726,583" fill="#e4e4dc"/>
<rect x="753" y="579" width="12" height="24" fill="#1b6b50"/>
<rect x="753" y="602" width="12" height="1" fill="#2ad69b"/>
<rect x="753" y="590" width="12" height="1" fill="#2ad69b"/>
<rect x="753" y="580" width="1" height="23" fill="#2ad69b"/>
<polygon points="754,590 754,584 755,586 756,588 757,590" fill="#2ad69b"/>
<polygon points="754,602 754,596 755,598 756,600 757,602" fill="#2ad69b"/>
<polygon points="753,579 757,579 753,583" fill="#e4e4dc"/>
<rect x="1340" y="579" width="18" height="24" fill="#1b6b50"/>
<rect x="1340" y="602" width="18" height="1" fill="#2ad69b"/>
<rect x="1340" y="590" width="18" height="1" fill="#2ad69b"/>
<rect x="1340" y="580" width="1" height="23" fill="#2ad69b"/>
<polygon points="1341,590 1341,584 1342,586 1343,588 1344,590" fill="#2ad69b"/>
<polygon points="1341,602 1341,596 1342,598 1343,600 1344,602" fill="#2ad69b"/>
<polygon points="1340,579 1344,579 1340,583" fill="#e4e4dc"/>
<rect x="350" y="604" width="18" height="24" fill="#1b6b50"/>
<rect x="350" y="627" width="18" height="1" fill="#2ad69b"/>
<rect x="350" y="615" width="18" height="1" fill="#2ad69b"/>
<rect x="350" y="605" width="1" height="23" fill="#2ad69b"/>
<polygon points="351,615 351,609 352,611 353,613 354,615" fill="#2ad69b"/>
<polygon points="351,627 351,621 352,623 353,625 354,627" fill="#2ad69b"/>
<polygon points="350,604 354,604 350,608" fill="#e4e4dc"/>
<rect x="445" y="604" width="19" height="24" fill="#1b6b50"/>
<rect x="445" y="627" width="19" height="1" fill="#2ad69b"/>
<rect x="445" y="615" width="19" height="1" fill="#2ad69b"/>
<rect x="445" y="605" width="1" height="23" fill="#2ad69b"/>
<polygon points="446,615 446,609 447,611 448,613 449,615" fill="#2ad69b"/>
<polygon points="446,627 446,621 447,623 448,625 449,627" fill="#2ad69b"/>
<polygon points="445,604 449,604 445,608" fill="#e4e4dc"/>
<rect x="781" y="604" width="11.4" height="24" fill="#1b6b50"/>
<rect x="781" y="627" width="11.4" height="1" fill="#2ad69b"/>
<rect x="781" y="615" width="11.4" height="1" fill="#2ad69b"/>
<rect x="781" y="605" width="1" height="23" fill="#2ad69b"/>
<polygon points="782,615 782,609 783,611 784,613 785,615" fill="#2ad69b"/>
<polygon points="782,627 782,621 783,623 784,625 785,627" fill="#2ad69b"/>
<polygon points="781,604 785,604 781,608" fill="#e4e4dc"/>
<rect x="784" y="554" width="1" height="24" fill="#333333"/>
<rect x="1146" y="554" width="1" height="24" fill="#333333"/>
<rect x="1250" y="554" width="1" height="24" fill="#333333"/>
</g>
<rect x="555" y="157" width="1" height="656" fill="#2D8CEB" shape-rendering="crispEdges"/>
<polygon points="550.5,146 560.5,146 560.5,153 556.5,158 554.5,158 550.5,153" fill="#2D8CEB"/>
<rect x="66" y="300" width="32" height="24" fill="#0a5886"/>
<g transform="translate(51.6,305.6)"><rect x="0" y="4.6" width="8.4" height="5.6" rx="0.6" fill="#b2b2b2"/><path d="M1.6 4.8V3.4A2.4 2.4 0 0 1 6.2 2.4" fill="none" stroke="#b2b2b2" stroke-width="1.4" stroke-linecap="butt"/><rect x="3.5" y="6.3" width="1.4" height="2.6" fill="#232323"/></g>
<text x="81.2" y="315.6" font-size="9.2" fill="#b9cde0" text-anchor="middle">V9</text>
<g transform="translate(105.6,307)" fill="none" stroke="#b2b2b2" stroke-width="1.2"><rect x="0.6" y="0.6" width="7.2" height="3"/><rect x="0.6" y="5.4" width="7.2" height="3"/><path d="M7.8 2.1H11.6V6.9H7.8" /><path d="M9.4 0.8V8.2" stroke-width="1"/></g>
<g transform="translate(132,308.2)"><path d="M0 4.2C2 1.2 4.4 0 6.6 0C8.8 0 11.2 1.2 13.2 4.2C11.2 7.2 8.8 8.4 6.6 8.4C4.4 8.4 2 7.2 0 4.2Z" fill="#b2b2b2"/><circle cx="6.6" cy="4.2" r="2.7" fill="#232323"/><circle cx="6.6" cy="4.2" r="1.5" fill="#b2b2b2"/><circle cx="5.9" cy="3.5" r="0.8" fill="#232323"/></g>
<rect x="66" y="325" width="32" height="24" fill="#0a5886"/>
<g transform="translate(51.6,330.6)"><rect x="0" y="4.6" width="8.4" height="5.6" rx="0.6" fill="#b2b2b2"/><path d="M1.6 4.8V3.4A2.4 2.4 0 0 1 6.2 2.4" fill="none" stroke="#b2b2b2" stroke-width="1.4" stroke-linecap="butt"/><rect x="3.5" y="6.3" width="1.4" height="2.6" fill="#232323"/></g>
<text x="81.2" y="340.6" font-size="9.2" fill="#b9cde0" text-anchor="middle">V8</text>
<g transform="translate(105.6,332)" fill="none" stroke="#b2b2b2" stroke-width="1.2"><rect x="0.6" y="0.6" width="7.2" height="3"/><rect x="0.6" y="5.4" width="7.2" height="3"/><path d="M7.8 2.1H11.6V6.9H7.8" /><path d="M9.4 0.8V8.2" stroke-width="1"/></g>
<g transform="translate(132,333.2)"><path d="M0 4.2C2 1.2 4.4 0 6.6 0C8.8 0 11.2 1.2 13.2 4.2C11.2 7.2 8.8 8.4 6.6 8.4C4.4 8.4 2 7.2 0 4.2Z" fill="#b2b2b2"/><circle cx="6.6" cy="4.2" r="2.7" fill="#232323"/><circle cx="6.6" cy="4.2" r="1.5" fill="#b2b2b2"/><circle cx="5.9" cy="3.5" r="0.8" fill="#232323"/></g>
<rect x="66" y="350" width="32" height="24" fill="#0a5886"/>
<g transform="translate(51.6,355.6)"><rect x="0" y="4.6" width="8.4" height="5.6" rx="0.6" fill="#b2b2b2"/><path d="M1.6 4.8V3.4A2.4 2.4 0 0 1 6.2 2.4" fill="none" stroke="#b2b2b2" stroke-width="1.4" stroke-linecap="butt"/><rect x="3.5" y="6.3" width="1.4" height="2.6" fill="#232323"/></g>
<text x="81.2" y="365.6" font-size="9.2" fill="#b9cde0" text-anchor="middle">V7</text>
<g transform="translate(105.6,357)" fill="none" stroke="#b2b2b2" stroke-width="1.2"><rect x="0.6" y="0.6" width="7.2" height="3"/><rect x="0.6" y="5.4" width="7.2" height="3"/><path d="M7.8 2.1H11.6V6.9H7.8" /><path d="M9.4 0.8V8.2" stroke-width="1"/></g>
<g transform="translate(132,358.2)"><path d="M0 4.2C2 1.2 4.4 0 6.6 0C8.8 0 11.2 1.2 13.2 4.2C11.2 7.2 8.8 8.4 6.6 8.4C4.4 8.4 2 7.2 0 4.2Z" fill="#b2b2b2"/><circle cx="6.6" cy="4.2" r="2.7" fill="#232323"/><circle cx="6.6" cy="4.2" r="1.5" fill="#b2b2b2"/><circle cx="5.9" cy="3.5" r="0.8" fill="#232323"/></g>
<rect x="66" y="375" width="32" height="24" fill="#0a5886"/>
<g transform="translate(51.6,380.6)"><rect x="0" y="4.6" width="8.4" height="5.6" rx="0.6" fill="#b2b2b2"/><path d="M1.6 4.8V3.4A2.4 2.4 0 0 1 6.2 2.4" fill="none" stroke="#b2b2b2" stroke-width="1.4" stroke-linecap="butt"/><rect x="3.5" y="6.3" width="1.4" height="2.6" fill="#232323"/></g>
<text x="81.2" y="390.6" font-size="9.2" fill="#b9cde0" text-anchor="middle">V6</text>
<g transform="translate(105.6,382)" fill="none" stroke="#b2b2b2" stroke-width="1.2"><rect x="0.6" y="0.6" width="7.2" height="3"/><rect x="0.6" y="5.4" width="7.2" height="3"/><path d="M7.8 2.1H11.6V6.9H7.8" /><path d="M9.4 0.8V8.2" stroke-width="1"/></g>
<g transform="translate(132,383.2)"><path d="M0 4.2C2 1.2 4.4 0 6.6 0C8.8 0 11.2 1.2 13.2 4.2C11.2 7.2 8.8 8.4 6.6 8.4C4.4 8.4 2 7.2 0 4.2Z" fill="#b2b2b2"/><circle cx="6.6" cy="4.2" r="2.7" fill="#232323"/><circle cx="6.6" cy="4.2" r="1.5" fill="#b2b2b2"/><circle cx="5.9" cy="3.5" r="0.8" fill="#232323"/></g>
<rect x="66" y="400" width="32" height="24" fill="#0a5886"/>
<g transform="translate(51.6,405.6)"><rect x="0" y="4.6" width="8.4" height="5.6" rx="0.6" fill="#b2b2b2"/><path d="M1.6 4.8V3.4A2.4 2.4 0 0 1 6.2 2.4" fill="none" stroke="#b2b2b2" stroke-width="1.4" stroke-linecap="butt"/><rect x="3.5" y="6.3" width="1.4" height="2.6" fill="#232323"/></g>
<text x="81.2" y="415.6" font-size="9.2" fill="#b9cde0" text-anchor="middle">V5</text>
<g transform="translate(105.6,407)" fill="none" stroke="#b2b2b2" stroke-width="1.2"><rect x="0.6" y="0.6" width="7.2" height="3"/><rect x="0.6" y="5.4" width="7.2" height="3"/><path d="M7.8 2.1H11.6V6.9H7.8" /><path d="M9.4 0.8V8.2" stroke-width="1"/></g>
<g transform="translate(132,408.2)"><path d="M0 4.2C2 1.2 4.4 0 6.6 0C8.8 0 11.2 1.2 13.2 4.2C11.2 7.2 8.8 8.4 6.6 8.4C4.4 8.4 2 7.2 0 4.2Z" fill="#b2b2b2"/><circle cx="6.6" cy="4.2" r="2.7" fill="#232323"/><circle cx="6.6" cy="4.2" r="1.5" fill="#b2b2b2"/><circle cx="5.9" cy="3.5" r="0.8" fill="#232323"/></g>
<g transform="translate(51.6,430.6)"><rect x="0" y="4.6" width="8.4" height="5.6" rx="0.6" fill="#b2b2b2"/><path d="M1.6 4.8V3.4A2.4 2.4 0 0 1 6.2 2.4" fill="none" stroke="#b2b2b2" stroke-width="1.4" stroke-linecap="butt"/><rect x="3.5" y="6.3" width="1.4" height="2.6" fill="#232323"/></g>
<text x="81.2" y="440.6" font-size="9.2" fill="#b0b0b0" text-anchor="middle">V4</text>
<g transform="translate(105.6,432)" fill="none" stroke="#b2b2b2" stroke-width="1.2"><rect x="0.6" y="0.6" width="7.2" height="3"/><rect x="0.6" y="5.4" width="7.2" height="3"/><path d="M7.8 2.1H11.6V6.9H7.8" /><path d="M9.4 0.8V8.2" stroke-width="1"/></g>
<g transform="translate(132,433.2)"><path d="M0 4.2C2 1.2 4.4 0 6.6 0C8.8 0 11.2 1.2 13.2 4.2C11.2 7.2 8.8 8.4 6.6 8.4C4.4 8.4 2 7.2 0 4.2Z" fill="#b2b2b2"/><circle cx="6.6" cy="4.2" r="2.7" fill="#232323"/><circle cx="6.6" cy="4.2" r="1.5" fill="#b2b2b2"/><circle cx="5.9" cy="3.5" r="0.8" fill="#232323"/></g>
<g transform="translate(51.6,455.6)"><rect x="0" y="4.6" width="8.4" height="5.6" rx="0.6" fill="#b2b2b2"/><path d="M1.6 4.8V3.4A2.4 2.4 0 0 1 6.2 2.4" fill="none" stroke="#b2b2b2" stroke-width="1.4" stroke-linecap="butt"/><rect x="3.5" y="6.3" width="1.4" height="2.6" fill="#232323"/></g>
<text x="81.2" y="465.6" font-size="9.2" fill="#b0b0b0" text-anchor="middle">V3</text>
<g transform="translate(105.6,457)" fill="none" stroke="#b2b2b2" stroke-width="1.2"><rect x="0.6" y="0.6" width="7.2" height="3"/><rect x="0.6" y="5.4" width="7.2" height="3"/><path d="M7.8 2.1H11.6V6.9H7.8" /><path d="M9.4 0.8V8.2" stroke-width="1"/></g>
<g transform="translate(132,458.2)"><path d="M0 4.2C2 1.2 4.4 0 6.6 0C8.8 0 11.2 1.2 13.2 4.2C11.2 7.2 8.8 8.4 6.6 8.4C4.4 8.4 2 7.2 0 4.2Z" fill="#b2b2b2"/><circle cx="6.6" cy="4.2" r="2.7" fill="#232323"/><circle cx="6.6" cy="4.2" r="1.5" fill="#b2b2b2"/><circle cx="5.9" cy="3.5" r="0.8" fill="#232323"/></g>
<g transform="translate(51.6,480.6)"><rect x="0" y="4.6" width="8.4" height="5.6" rx="0.6" fill="#b2b2b2"/><path d="M1.6 4.8V3.4A2.4 2.4 0 0 1 6.2 2.4" fill="none" stroke="#b2b2b2" stroke-width="1.4" stroke-linecap="butt"/><rect x="3.5" y="6.3" width="1.4" height="2.6" fill="#232323"/></g>
<text x="81.2" y="490.6" font-size="9.2" fill="#b0b0b0" text-anchor="middle">V2</text>
<g transform="translate(105.6,482)" fill="none" stroke="#b2b2b2" stroke-width="1.2"><rect x="0.6" y="0.6" width="7.2" height="3"/><rect x="0.6" y="5.4" width="7.2" height="3"/><path d="M7.8 2.1H11.6V6.9H7.8" /><path d="M9.4 0.8V8.2" stroke-width="1"/></g>
<g transform="translate(132,483.2)"><path d="M0 4.2C2 1.2 4.4 0 6.6 0C8.8 0 11.2 1.2 13.2 4.2C11.2 7.2 8.8 8.4 6.6 8.4C4.4 8.4 2 7.2 0 4.2Z" fill="#b2b2b2"/><circle cx="6.6" cy="4.2" r="2.7" fill="#232323"/><circle cx="6.6" cy="4.2" r="1.5" fill="#b2b2b2"/><circle cx="5.9" cy="3.5" r="0.8" fill="#232323"/></g>
<g transform="translate(51.6,505.6)"><rect x="0" y="4.6" width="8.4" height="5.6" rx="0.6" fill="#b2b2b2"/><path d="M1.6 4.8V3.4A2.4 2.4 0 0 1 6.2 2.4" fill="none" stroke="#b2b2b2" stroke-width="1.4" stroke-linecap="butt"/><rect x="3.5" y="6.3" width="1.4" height="2.6" fill="#232323"/></g>
<text x="81.2" y="515.6" font-size="9.2" fill="#b0b0b0" text-anchor="middle">V1</text>
<g transform="translate(105.6,507)" fill="none" stroke="#b2b2b2" stroke-width="1.2"><rect x="0.6" y="0.6" width="7.2" height="3"/><rect x="0.6" y="5.4" width="7.2" height="3"/><path d="M7.8 2.1H11.6V6.9H7.8" /><path d="M9.4 0.8V8.2" stroke-width="1"/></g>
<g transform="translate(132,508.2)"><path d="M0 4.2C2 1.2 4.4 0 6.6 0C8.8 0 11.2 1.2 13.2 4.2C11.2 7.2 8.8 8.4 6.6 8.4C4.4 8.4 2 7.2 0 4.2Z" fill="#b2b2b2"/><circle cx="6.6" cy="4.2" r="2.7" fill="#232323"/><circle cx="6.6" cy="4.2" r="1.5" fill="#b2b2b2"/><circle cx="5.9" cy="3.5" r="0.8" fill="#232323"/></g>
<g transform="translate(51.6,534.6)"><rect x="0" y="4.6" width="8.4" height="5.6" rx="0.6" fill="#b2b2b2"/><path d="M1.6 4.8V3.4A2.4 2.4 0 0 1 6.2 2.4" fill="none" stroke="#b2b2b2" stroke-width="1.4" stroke-linecap="butt"/><rect x="3.5" y="6.3" width="1.4" height="2.6" fill="#232323"/></g>
<text x="81" y="544.8" font-size="9.2" fill="#b0b0b0" text-anchor="middle">A1</text>
<g transform="translate(105.6,536)" fill="none" stroke="#b2b2b2" stroke-width="1.2"><rect x="0.6" y="0.6" width="7.2" height="3"/><rect x="0.6" y="5.4" width="7.2" height="3"/><path d="M7.8 2.1H11.6V6.9H7.8" /><path d="M9.4 0.8V8.2" stroke-width="1"/></g>
<text x="138.5" y="544.6" font-size="9.5" fill="#b0b0b0" text-anchor="middle">M</text>
<text x="165.3" y="544.6" font-size="9.5" fill="#b0b0b0" text-anchor="middle">S</text>
<g transform="translate(188,534.5)"><rect x="2.4" y="0" width="4.4" height="8" rx="2.2" fill="#4d4d4d"/><path d="M0.6 5v1.2a4 4 0 0 0 8 0V5" fill="none" stroke="#4d4d4d" stroke-width="1.1"/><rect x="4.1" y="10" width="1" height="2.4" fill="#4d4d4d"/><rect x="2.2" y="12" width="4.8" height="1" fill="#4d4d4d"/></g>
<rect x="66" y="554" width="32" height="24" fill="#0a5886"/>
<g transform="translate(51.6,559.6)"><rect x="0" y="4.6" width="8.4" height="5.6" rx="0.6" fill="#b2b2b2"/><path d="M1.6 4.8V3.4A2.4 2.4 0 0 1 6.2 2.4" fill="none" stroke="#b2b2b2" stroke-width="1.4" stroke-linecap="butt"/><rect x="3.5" y="6.3" width="1.4" height="2.6" fill="#232323"/></g>
<text x="81" y="569.8" font-size="9.2" fill="#b9cde0" text-anchor="middle">A2</text>
<g transform="translate(105.6,561)" fill="none" stroke="#b2b2b2" stroke-width="1.2"><rect x="0.6" y="0.6" width="7.2" height="3"/><rect x="0.6" y="5.4" width="7.2" height="3"/><path d="M7.8 2.1H11.6V6.9H7.8" /><path d="M9.4 0.8V8.2" stroke-width="1"/></g>
<text x="138.5" y="569.6" font-size="9.5" fill="#b0b0b0" text-anchor="middle">M</text>
<text x="165.3" y="569.6" font-size="9.5" fill="#b0b0b0" text-anchor="middle">S</text>
<g transform="translate(188,559.5)"><rect x="2.4" y="0" width="4.4" height="8" rx="2.2" fill="#4d4d4d"/><path d="M0.6 5v1.2a4 4 0 0 0 8 0V5" fill="none" stroke="#4d4d4d" stroke-width="1.1"/><rect x="4.1" y="10" width="1" height="2.4" fill="#4d4d4d"/><rect x="2.2" y="12" width="4.8" height="1" fill="#4d4d4d"/></g>
<rect x="66" y="579" width="32" height="24" fill="#0a5886"/>
<g transform="translate(51.6,584.6)"><rect x="0" y="4.6" width="8.4" height="5.6" rx="0.6" fill="#b2b2b2"/><path d="M1.6 4.8V3.4A2.4 2.4 0 0 1 6.2 2.4" fill="none" stroke="#b2b2b2" stroke-width="1.4" stroke-linecap="butt"/><rect x="3.5" y="6.3" width="1.4" height="2.6" fill="#232323"/></g>
<text x="81" y="594.8" font-size="9.2" fill="#b9cde0" text-anchor="middle">A3</text>
<g transform="translate(105.6,586)" fill="none" stroke="#b2b2b2" stroke-width="1.2"><rect x="0.6" y="0.6" width="7.2" height="3"/><rect x="0.6" y="5.4" width="7.2" height="3"/><path d="M7.8 2.1H11.6V6.9H7.8" /><path d="M9.4 0.8V8.2" stroke-width="1"/></g>
<text x="138.5" y="594.6" font-size="9.5" fill="#b0b0b0" text-anchor="middle">M</text>
<text x="165.3" y="594.6" font-size="9.5" fill="#b0b0b0" text-anchor="middle">S</text>
<g transform="translate(188,584.5)"><rect x="2.4" y="0" width="4.4" height="8" rx="2.2" fill="#4d4d4d"/><path d="M0.6 5v1.2a4 4 0 0 0 8 0V5" fill="none" stroke="#4d4d4d" stroke-width="1.1"/><rect x="4.1" y="10" width="1" height="2.4" fill="#4d4d4d"/><rect x="2.2" y="12" width="4.8" height="1" fill="#4d4d4d"/></g>
<rect x="66" y="604" width="32" height="24" fill="#0a5886"/>
<g transform="translate(51.6,609.6)"><rect x="0" y="4.6" width="8.4" height="5.6" rx="0.6" fill="#b2b2b2"/><path d="M1.6 4.8V3.4A2.4 2.4 0 0 1 6.2 2.4" fill="none" stroke="#b2b2b2" stroke-width="1.4" stroke-linecap="butt"/><rect x="3.5" y="6.3" width="1.4" height="2.6" fill="#232323"/></g>
<text x="81" y="619.8" font-size="9.2" fill="#b9cde0" text-anchor="middle">A4</text>
<g transform="translate(105.6,611)" fill="none" stroke="#b2b2b2" stroke-width="1.2"><rect x="0.6" y="0.6" width="7.2" height="3"/><rect x="0.6" y="5.4" width="7.2" height="3"/><path d="M7.8 2.1H11.6V6.9H7.8" /><path d="M9.4 0.8V8.2" stroke-width="1"/></g>
<text x="138.5" y="619.6" font-size="9.5" fill="#b0b0b0" text-anchor="middle">M</text>
<text x="165.3" y="619.6" font-size="9.5" fill="#b0b0b0" text-anchor="middle">S</text>
<g transform="translate(188,609.5)"><rect x="2.4" y="0" width="4.4" height="8" rx="2.2" fill="#4d4d4d"/><path d="M0.6 5v1.2a4 4 0 0 0 8 0V5" fill="none" stroke="#4d4d4d" stroke-width="1.1"/><rect x="4.1" y="10" width="1" height="2.4" fill="#4d4d4d"/><rect x="2.2" y="12" width="4.8" height="1" fill="#4d4d4d"/></g>
<g transform="translate(51.6,634.6)"><rect x="0" y="4.6" width="8.4" height="5.6" rx="0.6" fill="#b2b2b2"/><path d="M1.6 4.8V3.4A2.4 2.4 0 0 1 6.2 2.4" fill="none" stroke="#b2b2b2" stroke-width="1.4" stroke-linecap="butt"/><rect x="3.5" y="6.3" width="1.4" height="2.6" fill="#232323"/></g>
<text x="69.5" y="645" font-size="11" fill="#8e8e8e">Mix</text>
<text x="146.7" y="645.6" font-size="10" fill="#2D8CEB">0.0</text>
<path d="M217.5 632.5L222.6 637 217.5 641.5ZM228.5 632.5L223.4 637 228.5 641.5Z" fill="#b2b2b2"/><rect x="222.6" y="632.5" width="0.9" height="9" fill="#b2b2b2"/>
<path d="M12.3 99.3l4.4 4.4M16.7 99.3l-4.4 4.4" stroke="#8a8a8a" stroke-width="1" fill="none"/>
<text x="28.5" y="105" font-size="11" fill="#b4b4b4">IMG_7963</text>
<path d="M92 98h8.2M92 101.3h8.2M92 104.6h8.2" stroke="#b4b4b4" stroke-width="1.1" fill="none"/>
<text x="18.6" y="134.7" font-size="16" letter-spacing="0.25" stroke="#2D8CEB" stroke-width="0.35" fill="#2D8CEB">00:00:17:11</text>
<g fill="#2D8CEB" shape-rendering="crispEdges"><rect x="30" y="143" width="1" height="13"/><rect x="29" y="143" width="3" height="2"/><rect x="32" y="147" width="4" height="2"/><rect x="23" y="150" width="5" height="2"/><rect x="32" y="150" width="2.5" height="2"/><rect x="26" y="153" width="3" height="2"/><rect x="34" y="153" width="3" height="2"/></g><path d="M24 145.1L35.1 155.9" stroke="#2D8CEB" stroke-width="1" fill="none"/>
<path d="M59.6 155.9v-6.1a4.4 4.4 0 0 1 8.8 0v6.1" fill="none" stroke="#2D8CEB" stroke-width="3"/><path d="M59.6 155.9v-3.7M68.4 155.9v-3.7" stroke="#1a69a6" stroke-width="3" fill="none"/>
<rect x="91" y="144.2" width="3.8" height="4.2" fill="#2D8CEB"/><path d="M94.8 150.7h-3.4v3.5h3.4" fill="none" stroke="#2D8CEB" stroke-width="1"/><rect x="97.2" y="144" width="7.8" height="5" fill="#2D8CEB"/><path d="M95.2 142.6L106 152" stroke="#232323" stroke-width="1.6"/><path d="M96 144.8V157.2L99.6 153.4L104.9 152.4Z" fill="#2D8CEB"/>
<path d="M129 145.7h7.1v5.7l-3.55 3.6-3.55-3.6z" fill="#b0b0b0"/>
<path d="M163.4 146.6L171.6 156" stroke="#b4b4b4" stroke-width="2.7" stroke-linecap="round" fill="none"/><circle cx="163.2" cy="146.6" r="3.7" fill="#b4b4b4"/><path d="M163 146.4L158.6 143.2L161.8 140.6Z" fill="#232323"/><circle cx="162.2" cy="145.6" r="1.5" fill="#232323"/>
<rect x="192.2" y="145.4" width="15.6" height="9.5" rx="1.8" fill="#4a4a4a"/><text x="200" y="153.3" font-size="8.6" font-weight="bold" fill="#232323" text-anchor="middle" letter-spacing="0.1">CC</text>
</svg>
<div id="status">
<svg class="abs" style="left:1px;top:4px" width="18" height="14" viewBox="0 0 18 14"><path id="ccp" d="M5.2 12.8C2.4 12.8 0.8 10.9 0.8 8.6C0.8 6.5 2.1 4.9 4.1 4.5C4.9 2.4 6.9 1 9.3 1C12.2 1 14.5 2.9 15 5.6C16.5 6.1 17.3 7.5 17.3 9.1C17.3 11.2 15.8 12.8 13.7 12.8Z" fill="none" stroke="#c6c6c6" stroke-width="1"/><path d="M5.2 12.8C2.4 12.8 0.8 10.9 0.8 8.6C0.8 6.5 2.1 4.9 4.1 4.5C4.9 2.4 6.9 1 9.3 1C12.2 1 14.5 2.9 15 5.6C16.5 6.1 17.3 7.5 17.3 9.1C17.3 11.2 15.8 12.8 13.7 12.8Z" fill="#c6c6c6" transform="translate(9 7.2) scale(.7) translate(-9 -7.2)"/><path d="M4.4 9.6C3.6 8.2 4.4 6.4 6 6.2C7 6.1 7.7 6.6 8.4 7.3L11 10" fill="none" stroke="#262626" stroke-width="1.2"/><path d="M9.4 6.4C10 5.2 11.6 4.9 12.6 5.8" fill="none" stroke="#262626" stroke-width="1.1"/></svg>
<div class="abs" style="left:57px;top:7px;font-size:11px;color:#a2a2a2" id="stattext">Click to select, or click in empty space and drag to marquee select. Use Shift, Alt, and Ctrl for other options.</div>
<div class="abs" style="left:1573px;top:0;width:1px;height:22px;background:#2e2e2e"></div>
</div>
<div id="taskbar">
<svg class="abs" style="left:0;top:0" width="1600" height="40" viewBox="0 860 1600 40">
<!-- windows logo -->
<path d="M16 874.2l6.6-.9v6.3H16zM23.4 873.2l8.6-1.2v7.6h-8.6zM16 880.4h6.6v6.3l-6.6-.9zM23.4 880.4H32v7.6l-8.6-1.2z" fill="#fff"/>
<!-- search box -->
<rect x="48.5" y="860.5" width="287" height="39.5" fill="#333333" stroke="#4b4b4b" stroke-width="1"/>
<circle cx="70.5" cy="876.5" r="5.2" fill="none" stroke="#e6e6e6" stroke-width="1.4"/><path d="M66.8 880.400L60.5 887" stroke="#e6e6e6" stroke-width="1.5"/>
<!-- search illustration -->
<g>
<g fill="#6f8398"><rect x="285" y="876" width="1" height="9"/><rect x="288" y="877" width="1" height="10"/><rect x="291" y="878" width="1" height="9"/><rect x="294" y="878" width="1" height="9"/><rect x="297" y="877" width="1" height="10"/><rect x="300" y="878" width="1" height="9"/><rect x="303" y="876" width="1" height="10"/><rect x="306" y="878" width="1" height="10"/><rect x="309" y="877" width="1" height="9"/><rect x="312" y="876" width="1" height="9"/><rect x="315" y="878" width="1" height="10"/><rect x="318" y="878" width="1" height="9"/><rect x="321" y="878" width="1" height="9"/><rect x="324" y="876" width="1" height="9"/><rect x="327" y="877" width="1" height="9"/><rect x="330" y="877" width="1" height="10"/><rect x="333" y="878" width="1" height="10"/></g>
<path d="M260 900C270 892 280 886.5 290 885.5C305 884 322 884.5 336 887V900Z" fill="#2a8a90"/>
<path d="M266 900C276 892.5 288 888 300 887.5C314 887 326 889.5 336 893V900Z" fill="#2f8fd8"/>
<path d="M286 900C292 894 302 891 312 892C320 893 328 896 332 900Z" fill="#4aa6e6"/>
<clipPath id="sbx"><rect x="49" y="861" width="287" height="39"/></clipPath>
<g clip-path="url(#sbx)"><circle cx="281" cy="877" r="3.2" fill="#d7b25c"/><circle cx="285" cy="874" r="4" fill="#3fae6a"/><circle cx="289" cy="878" r="3.5" fill="#49b8a0"/><circle cx="291" cy="870" r="4.2" fill="#5cc98a"/><circle cx="296" cy="874" r="4.5" fill="#2f9a5a"/><circle cx="298" cy="868" r="3.8" fill="#d7b25c"/><circle cx="302" cy="871" r="4.6" fill="#3fae6a"/><circle cx="300" cy="878" r="3.5" fill="#5cc98a"/><circle cx="306" cy="866" r="4" fill="#d7b25c"/><circle cx="308" cy="873" r="5" fill="#2e8f6e"/><circle cx="312" cy="867" r="4.2" fill="#5cc98a"/><circle cx="314" cy="876" r="4" fill="#49b8a0"/><circle cx="317" cy="869" r="4" fill="#d7b25c"/><circle cx="320" cy="873" r="4.5" fill="#69c47c"/><circle cx="323" cy="867" r="3.8" fill="#3fae6a"/><circle cx="326" cy="874" r="5" fill="#d7b25c"/><circle cx="329" cy="869" r="4" fill="#c9a64e"/><circle cx="332" cy="876" r="4.5" fill="#d7b25c"/><circle cx="334" cy="868" r="3.5" fill="#5cc98a"/></g>
</g>
<!-- active highlight Pr -->
<rect x="486" y="860" width="48" height="40" fill="#45444f"/>
<!-- underlines -->
<g fill="#76b9ed"><rect x="392" y="898" width="39" height="2"/><rect x="486" y="898" width="48" height="2"/><rect x="686" y="898" width="39" height="2"/><rect x="735" y="898" width="39" height="2"/><rect x="785" y="898" width="39" height="2"/></g>
<!-- edge -->
<g><circle cx="363" cy="880" r="12" fill="#1f7fd0"/><path d="M351.2 878C352 870.5 358 867.8 363.5 868C370.5 868.4 375 873.5 375 878.5C371 873 363 872.5 359.5 877.5C357 882 359.5 888 365 891.8C357 892 350.5 886 351.2 878Z" fill="#2fb4d8"/><path d="M363.5 868C370.5 868.4 375 873.5 375 879C375 884 370 886.5 366 885C370 883.5 370.5 879.5 367.5 877C364.5 874.8 360 875 357 878C358 872 360.5 869 363.5 868Z" fill="#4fd68a"/><circle cx="365.5" cy="880" r="2.6" fill="#1c1a29"/><circle cx="356.3" cy="886.3" r="5.3" fill="#cfcfcf"/><circle cx="356.3" cy="884.6" r="1.8" fill="#8a8a8a"/><path d="M353 889.6a3.3 3.3 0 0 1 6.6 0z" fill="#8a8a8a"/></g>
<!-- explorer -->
<g><path d="M400 870h8l2 2.500h13v4h-23z" fill="#e8a52a"/><rect x="400" y="873.5" width="23" height="15.5" rx="1" fill="#f8d264"/><rect x="405" y="881" width="13" height="8" fill="#3a96dd"/><rect x="408.5" y="885" width="6" height="4" fill="#f8d264"/></g>
<!-- store -->
<g><path d="M455.8 873.5v-3.2a1 1 0 0 1 1-1h6.6a1 1 0 0 1 1 1v3.2" fill="none" stroke="#3a96dd" stroke-width="1.6"/><rect x="449" y="873" width="22" height="18" rx="2" fill="#f2f2f2"/><rect x="455" y="877" width="4.5" height="4.5" fill="#f25022"/><rect x="460.5" y="877" width="4.5" height="4.5" fill="#7fba00"/><rect x="455" y="882.5" width="4.5" height="4.5" fill="#00a4ef"/><rect x="460.5" y="882.5" width="4.5" height="4.5" fill="#ffb900"/></g>
<!-- Pr Ae Ps Ai -->
<g font-family="Liberation Sans, sans-serif" font-weight="bold" font-size="12.4" text-anchor="middle">
<rect x="498.5" y="868.5" width="22" height="22" rx="4" fill="#00005b"/><text x="509.5" y="884.3" fill="#9999ff">Pr</text>
<rect x="547.5" y="868.5" width="22" height="22" rx="4" fill="#00005b"/><text x="558.5" y="884.3" fill="#9999ff">Ae</text>
<rect x="596.5" y="868.5" width="22" height="22" rx="4" fill="#001e36"/><text x="607.5" y="884.3" fill="#31a8ff">Ps</text>
<rect x="645.5" y="868.5" width="22" height="22" rx="4" fill="#330000"/><text x="656.5" y="884.3" fill="#ff9a00">Ai</text>
</g>
<!-- spotify -->
<g><circle cx="705" cy="880" r="11.5" fill="#1ed760"/><path d="M698 876c5-1.5 10.5-1 14.5 1.300M699 880c4-1.1 8.5-.7 12 1.300M700 883.700c3.2-.9 6.5-.6 9.3 1" fill="none" stroke="#121212" stroke-width="2" stroke-linecap="round"/></g>
<!-- chrome x2 -->
<g id="chr1"><circle cx="755" cy="880" r="11.5" fill="#db4437"/><path d="M755 880L745.040 874.250A11.5 11.5 0 0 0 755 891.500z" fill="#0f9d58"/><path d="M755 880v11.500A11.5 11.5 0 0 0 764.960 874.250z" fill="#ffcd40"/><path d="M755 880L745.040 874.250A11.5 11.5 0 0 1 764.960 874.250z" fill="#db4437"/><circle cx="755" cy="880" r="5.3" fill="#fff"/><circle cx="755" cy="880" r="4.2" fill="#4285f4"/></g>
<g><circle cx="804.5" cy="880" r="11.5" fill="#db4437"/><path d="M804.5 880L794.540 874.250A11.5 11.5 0 0 0 804.5 891.500z" fill="#0f9d58"/><path d="M804.5 880v11.500A11.5 11.5 0 0 0 814.460 874.250z" fill="#ffcd40"/><path d="M804.5 880L794.540 874.250A11.5 11.5 0 0 1 814.460 874.250z" fill="#db4437"/><circle cx="804.5" cy="880" r="5.3" fill="#fff"/><circle cx="804.5" cy="880" r="4.2" fill="#4285f4"/><circle cx="810.5" cy="886.5" r="5" fill="#5aa0e0" stroke="#fff" stroke-width="1"/><circle cx="810.5" cy="885" r="1.8" fill="#e8d0b0"/><path d="M807.5 890a3 3 0 0 1 6 0z" fill="#333"/></g>
<!-- weather -->
<radialGradient id="sun" cx="0.35" cy="0.3" r="0.8"><stop offset="0" stop-color="#f8b830"/><stop offset="0.55" stop-color="#f3961e"/><stop offset="1" stop-color="#ee5a24"/></radialGradient><circle cx="1255.2" cy="880" r="10.3" fill="url(#sun)"/>
<!-- tray icons -->
<path d="M1382 883.500l6-6 6 6" fill="none" stroke="#fff" stroke-width="1.3"/>
<g fill="none" stroke="#fff" stroke-width="1.1"><path d="M1404.2 877.500h2.600l3.4-3.300v11.600l-3.4-3.300h-2.600z"/><path d="M1412.6 877.300a3.8 3.8 0 0 1 0 5.400M1415 875.200a6.8 6.8 0 0 1 0 9.600M1417.4 873.200a9.6 9.6 0 0 1 0 13.6"/></g>
<g fill="none" stroke="#fff" stroke-width="1.1"><rect x="1431.5" y="874.5" width="12.5" height="8.5"/><path d="M1437.7 883v3M1433.5 886.500h8.5"/><rect x="1428" y="875" width="4.5" height="4.5" fill="#1c1a29"/><path d="M1429.3 876.700l1 1.3 1.5-2"/></g>
<!-- notification -->
<path d="M1559.5 872.500h15v11h-4.500l-3 3v-3h-7.500z" fill="none" stroke="#fff" stroke-width="1.1"/><circle cx="1572" cy="883.5" r="2.6" fill="#1c1a29" stroke="#fff" stroke-width="1"/>
<rect x="1595.5" y="860" width="1" height="40" fill="#6a6a72"/>
</svg>
<div class="abs" style="left:88.500px;top:12.500px;font-size:15px;color:#ececec" id="srch">Type here to search</div>
<div class="abs" style="left:1275px;top:12.500px;font-size:15px;color:#fff">36°C</div>
<div class="abs" style="left:1313.5px;top:13px;font-size:13.2px;color:#fff" dir="rtl">مشمس</div>
<div class="abs" style="left:1462px;top:14.5px;font-size:12px;color:#fff">ع</div>
<div class="abs" style="left:1492.5px;top:5.5px;font-size:11.8px;color:#fff">11:25 ص</div>
<div class="abs" style="left:1487.5px;top:23.5px;font-size:11.5px;color:#fff">٢٠٢٣/٠٨/٠٦</div>

</div>
<div class="abs" id="wm1" style="left:701.5px;top:785.2px;font-size:65px;font-weight:bold;color:#8a8a8a;opacity:.62;font-family:'DejaVu Sans',sans-serif;transform:scaleX(.835);transform-origin:0 0" dir="rtl">مستقل</div>
<div class="abs" id="wm2" style="left:704px;top:850.5px;font-size:30px;font-weight:bold;color:#8a8a8a;opacity:.62;letter-spacing:0.6px">mostaql.com</div>
</body></html>
